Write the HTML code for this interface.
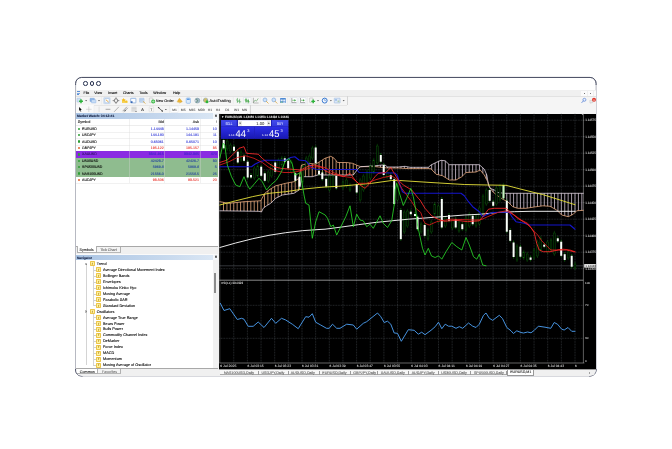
<!DOCTYPE html>
<html lang="en"><head><meta charset="utf-8"><title>MetaTrader 4</title>
<style>
html,body{margin:0;padding:0;background:#fff;}
body{width:672px;height:449px;position:relative;overflow:hidden;font-family:"Liberation Sans", sans-serif;text-rendering:geometricPrecision;}
.a{position:absolute;box-sizing:border-box;}
.t{white-space:nowrap;overflow:visible;-webkit-text-stroke-width:0.09px;}
svg{position:absolute;left:0;top:0;overflow:visible;}
svg text{font-family:"Liberation Sans", sans-serif;}
</style></head><body>
<svg width="672" height="449" viewBox="0 0 672 449"><path d="M75.6 83.45 A6.0 6.0 0 0 1 81.6 77.45 H590.1 A6.0 6.0 0 0 1 596.1 83.45 V370.0 A6.0 6.0 0 0 1 590.1 376.0 H81.6 A6.0 6.0 0 0 1 75.6 370.0 Z" fill="#fff" stroke="#acaeb8" stroke-width="0.95"/><path d="M75.6 84.95 V83.45 A6.0 6.0 0 0 1 81.6 77.45 H590.1 A6.0 6.0 0 0 1 596.1 83.45 V84.95" fill="none" stroke="#454a60" stroke-width="0.95"/><path d="M75.6 369.0 V370.0 A6.0 6.0 0 0 0 81.6 376.0 h1" fill="none" stroke="#454a60" stroke-width="0.95"/><path d="M596.1 369.0 V370.0 A6.0 6.0 0 0 1 590.1 376.0 h-1" fill="none" stroke="#454a60" stroke-width="0.95"/></svg>
<div class="a" id="clip" style="left:76.05000000000001px;top:77.9px;width:519.60px;height:297.65px;border-radius:6px;overflow:hidden;will-change:transform;"><div class="a" style="left:-76.05000000000001px;top:-77.9px;width:672px;height:449px;">
<div class="a" style="left:83.35px;top:81.25px;width:4.5px;height:4.5px;border-radius:50%;border:0.68px solid #27314f;"></div>
<div class="a" style="left:89.85px;top:81.25px;width:4.5px;height:4.5px;border-radius:50%;border:0.68px solid #27314f;"></div>
<div class="a" style="left:96.25px;top:81.25px;width:4.5px;height:4.5px;border-radius:50%;border:0.68px solid #27314f;"></div>
<div class="a" style="left:76.00px;top:90.30px;width:521.00px;height:5.80px;background:#f0f0f0;"></div>
<div class="a" style="left:76.60px;top:91.30px;width:3.60px;height:0.70px;background:#5b8fd6;"></div>
<div class="a" style="left:76.60px;top:92.60px;width:3.60px;height:0.60px;background:#7aa7e0;"></div>
<div class="a" style="left:76.60px;top:93.80px;width:2.60px;height:0.60px;background:#5b8fd6;"></div>
<div class="a t" style="top:90.00px;height:6px;line-height:6px;font-size:3.6px;color:#000;left:83.60px;">File</div>
<div class="a t" style="top:90.00px;height:6px;line-height:6px;font-size:3.6px;color:#000;left:94.30px;">View</div>
<div class="a t" style="top:90.00px;height:6px;line-height:6px;font-size:3.6px;color:#000;left:108.20px;">Insert</div>
<div class="a t" style="top:90.00px;height:6px;line-height:6px;font-size:3.6px;color:#000;left:123.00px;">Charts</div>
<div class="a t" style="top:90.00px;height:6px;line-height:6px;font-size:3.6px;color:#000;left:139.20px;">Tools</div>
<div class="a t" style="top:90.00px;height:6px;line-height:6px;font-size:3.6px;color:#000;left:153.30px;">Window</div>
<div class="a t" style="top:90.00px;height:6px;line-height:6px;font-size:3.6px;color:#000;left:173.00px;">Help</div>
<div class="a" style="left:581.50px;top:91.30px;width:5.40px;height:4.20px;background:#fbfbfb;"></div>
<div class="a" style="left:583.70px;top:93.20px;width:1.00px;height:0.70px;background:#777;"></div>
<div class="a" style="left:588.00px;top:91.30px;width:5.40px;height:4.20px;background:#fbfbfb;"></div>
<div class="a" style="left:590.20px;top:93.20px;width:1.00px;height:0.70px;background:#777;"></div>
<div class="a" style="left:594.50px;top:91.30px;width:5.40px;height:4.20px;background:#fbfbfb;"></div>
<div class="a" style="left:596.70px;top:93.20px;width:1.00px;height:0.70px;background:#777;"></div>
<div class="a" style="left:76.00px;top:96.10px;width:521.00px;height:17.50px;background:#f5f5f5;"></div>
<div class="a" style="left:76.00px;top:96.00px;width:521.00px;height:0.40px;background:#e2e2e2;"></div>
<div class="a" style="left:76.00px;top:104.60px;width:271.00px;height:0.40px;background:#e6e6e6;"></div>
<div class="a" style="left:346.60px;top:96.30px;width:0.40px;height:8.50px;background:#d5d5d5;"></div>
<div class="a" style="left:249.60px;top:105.00px;width:0.40px;height:8.40px;background:#d5d5d5;"></div>
<div class="a" style="left:0;top:0;width:672px;height:449px;filter:blur(0.28px);">
<div class="a" style="left:76.30px;top:105.00px;width:17.50px;height:8.50px;background:#fafafa;"></div>
<svg width="672" height="449" viewBox="0 0 672 449"><rect x="77.00" y="98.20" width="3.60" height="3.80" rx="0.3" fill="#cfe3f3" stroke="#86acd8" stroke-width="0.35" />
<path d="M79.05 100.45899999999999 H80.259 V99.24999999999999 H81.741 V100.45899999999999 H82.95 V101.94099999999999 H81.741 V103.14999999999999 H80.259 V101.94099999999999 H79.05 Z" fill="#2db33a"/>
<path d="M85.1 100.25 H87.1 L86.1 101.35 Z" fill="#2a2a2a"/>
<rect x="90.00" y="98.30" width="4.40" height="3.20" rx="0.3" fill="#8fb8ea" stroke="#5f8fd2" stroke-width="0.35" />
<rect x="91.40" y="99.70" width="4.50" height="3.20" rx="0.3" fill="#c9def6" stroke="#6d9bd8" stroke-width="0.35" />
<path d="M98.0 100.25 H100.0 L99.0 101.35 Z" fill="#2a2a2a"/>
<path d="M101.7 97.39999999999999 V103.8" fill="none" stroke="#d0d0d0" stroke-width="0.35" stroke-linecap="round"/>
<path d="M102.10000000000001 97.39999999999999 V103.8" fill="none" stroke="#ffffff" stroke-width="0.35" stroke-linecap="round"/>
<rect x="103.70" y="97.60" width="6.50" height="6.10" rx="0.3" fill="#d8e6f6" stroke="#a9c2e2" stroke-width="0.35" />
<rect x="104.90" y="98.50" width="4.30" height="4.30" rx="0.3" fill="#fbfcfe" stroke="#7fa3d6" stroke-width="0.4" />
<path d="M106.2 100.0 L108.3 101.8" fill="none" stroke="#e0a030" stroke-width="0.9" stroke-linecap="round"/>
<circle cx="116.00" cy="100.60" r="1.9" fill="none" stroke="#4a4a4a" stroke-width="0.55"/>
<path d="M116 97.6 V99.19999999999999 M116 102.0 V103.6 M113.0 100.6 H114.6 M117.4 100.6 H119.0" fill="none" stroke="#4a4a4a" stroke-width="0.5" stroke-linecap="round"/>
<path d="M122.0 100.0 L124.6 100.0 L125.2 100.8 L127.6 100.8 L127.6 103.0 L122.0 103.0 Z" fill="#f6d45a"/>
<path d="M123.6 98.0 L124.3 99.3 L125.7 99.39999999999999 L124.7 100.39999999999999 L125.0 101.8 L123.6 101.1 L122.3 101.8 L122.6 100.39999999999999 L121.6 99.39999999999999 L123.0 99.3 Z" fill="#f4bd22"/>
<circle cx="126.20" cy="101.60" r="1.0" fill="#f2c12e"/>
<rect x="130.70" y="98.30" width="5.20" height="4.60" rx="0.3" fill="#fafcff" stroke="#4f82c8" stroke-width="0.5" />
<rect x="130.70" y="101.20" width="1.90" height="1.70" rx="0.3" fill="#3566b4" />
<rect x="131.00" y="98.40" width="4.60" height="0.70" rx="0.3" fill="#9dbde6" />
<rect x="139.60" y="98.30" width="4.40" height="3.90" rx="0.3" fill="#d7e6f7" stroke="#6c9ad6" stroke-width="0.4" />
<path d="M140.4 99.6 H143.2 M140.4 100.8 H142.4" fill="none" stroke="#7fa6da" stroke-width="0.4" stroke-linecap="round"/>
<path d="M143.2 101.5 L145.2 103.3" fill="none" stroke="#d9a63a" stroke-width="0.8" stroke-linecap="round"/>
<path d="M147.2 97.39999999999999 V103.8" fill="none" stroke="#d0d0d0" stroke-width="0.35" stroke-linecap="round"/>
<path d="M147.6 97.39999999999999 V103.8" fill="none" stroke="#ffffff" stroke-width="0.35" stroke-linecap="round"/>
<rect x="149.30" y="98.00" width="3.50" height="4.60" rx="0.3" fill="#f4f4f4" stroke="#9a9a9a" stroke-width="0.35" />
<circle cx="153.20" cy="101.50" r="1.95" fill="#2db33a"/>
<path d="M152.1 101.5 H154.3 M153.2 100.39999999999999 V102.6" fill="none" stroke="#e8ffe8" stroke-width="0.45" stroke-linecap="round"/>
<path d="M177.2 101.6 L179.4 98.19999999999999 L181.0 100.0 L182.3 101.8 L180.0 102.8 Z" fill="#ebb534" stroke="#c48a14" stroke-width="0.3" stroke-linecap="round"/>
<rect x="186.20" y="98.00" width="4.20" height="5.30" rx="0.9" fill="#dcebfb" stroke="#5f9be2" stroke-width="0.5" />
<rect x="186.90" y="98.60" width="2.80" height="1.40" rx="0.3" fill="#5f9be2" />
<circle cx="197.40" cy="100.60" r="2.5" fill="#9fb8c4" stroke="#6f8b9c" stroke-width="0.4"/>
<path d="M196.6 99.0 Q198.8 100.6 196.6 102.39999999999999" fill="none" stroke="#4c7a5a" stroke-width="0.7" stroke-linecap="round"/>
<rect x="194.60" y="100.00" width="1.80" height="1.40" rx="0.3" fill="#c9d3da" />
<path d="M201.6 97.39999999999999 V103.8" fill="none" stroke="#d0d0d0" stroke-width="0.35" stroke-linecap="round"/>
<path d="M202.0 97.39999999999999 V103.8" fill="none" stroke="#ffffff" stroke-width="0.35" stroke-linecap="round"/>
<circle cx="205.60" cy="100.20" r="2.2" fill="#f0cf52" stroke="#6a93c8" stroke-width="0.45"/>
<path d="M203.6 100.0 H207.6" fill="none" stroke="#5b86c4" stroke-width="0.5" stroke-linecap="round"/>
<circle cx="207.00" cy="101.80" r="1.5" fill="#2db33a"/>
<path d="M233.4 97.39999999999999 V103.8" fill="none" stroke="#d0d0d0" stroke-width="0.35" stroke-linecap="round"/>
<path d="M233.8 97.39999999999999 V103.8" fill="none" stroke="#ffffff" stroke-width="0.35" stroke-linecap="round"/>
<path d="M237.4 98.3 V102.6 M236.4 100.0 H237.4 M237.4 101.39999999999999 H238.4 M239.6 99.19999999999999 V103.0 M238.6 100.8 H239.6 M239.6 101.8 H240.8" fill="none" stroke="#2f9a3a" stroke-width="0.5" stroke-linecap="round"/>
<rect x="243.40" y="97.50" width="7.60" height="6.20" rx="0.3" fill="#fbfcfd" stroke="#c4d0de" stroke-width="0.35" />
<path d="M246.0 98.3 V102.6 M245.0 100.0 H246.0 M246.0 101.39999999999999 H247.0 M248.2 99.19999999999999 V103.0 M247.2 100.8 H248.2 M248.2 101.8 H249.4" fill="none" stroke="#2a8a2a" stroke-width="0.5" stroke-linecap="round"/>
<rect x="245.50" y="99.10" width="1.10" height="2.40" rx="0.3" fill="#49b14f" />
<rect x="247.70" y="100.00" width="1.10" height="2.20" rx="0.3" fill="#49b14f" />
<path d="M253.6 102.19999999999999 L255.2 100.0 L256.4 101.19999999999999 L258.0 98.8" fill="none" stroke="#3a8a3a" stroke-width="0.5" stroke-linecap="round"/>
<path d="M253.4 98.19999999999999 V103.0 H258.2" fill="none" stroke="#555" stroke-width="0.4" stroke-linecap="round"/>
<path d="M260.4 97.39999999999999 V103.8" fill="none" stroke="#d0d0d0" stroke-width="0.35" stroke-linecap="round"/>
<path d="M260.79999999999995 97.39999999999999 V103.8" fill="none" stroke="#ffffff" stroke-width="0.35" stroke-linecap="round"/>
<circle cx="265.00" cy="99.90" r="1.9" fill="#cfe3f8" stroke="#5e90d2" stroke-width="0.5"/>
<path d="M266.4 101.39999999999999 L268.2 103.19999999999999" fill="none" stroke="#d9a63a" stroke-width="0.8" stroke-linecap="round"/>
<circle cx="273.80" cy="99.90" r="1.9" fill="#cfe3f8" stroke="#5e90d2" stroke-width="0.5"/>
<path d="M275.2 101.39999999999999 L277.0 103.19999999999999" fill="none" stroke="#d9a63a" stroke-width="0.8" stroke-linecap="round"/>
<rect x="280.10" y="98.10" width="5.70" height="5.00" rx="0.3" fill="#4f8ad4" />
<rect x="280.60" y="99.40" width="2.10" height="1.60" rx="0.3" fill="#e4eefa" />
<rect x="283.20" y="99.40" width="2.10" height="1.60" rx="0.3" fill="#e4eefa" />
<rect x="280.60" y="101.50" width="2.10" height="1.20" rx="0.3" fill="#9ad09a" />
<rect x="283.20" y="101.50" width="2.10" height="1.20" rx="0.3" fill="#e4eefa" />
<path d="M288.0 97.39999999999999 V103.8" fill="none" stroke="#d0d0d0" stroke-width="0.35" stroke-linecap="round"/>
<path d="M288.4 97.39999999999999 V103.8" fill="none" stroke="#ffffff" stroke-width="0.35" stroke-linecap="round"/>
<rect x="290.20" y="97.50" width="7.00" height="6.20" rx="0.3" fill="#fbfcfd" stroke="#c4d0de" stroke-width="0.35" />
<path d="M291.8 98.39999999999999 V102.6 H296.0" fill="none" stroke="#444" stroke-width="0.45" stroke-linecap="round"/>
<path d="M292.59999999999997 100.3 H294.4" fill="none" stroke="#2a9a2a" stroke-width="0.5" stroke-linecap="round"/>
<path d="M294.4 99.19999999999999 L296.0 100.3 L294.4 101.39999999999999 Z" fill="#2a9a2a"/>
<rect x="298.90" y="97.50" width="7.00" height="6.20" rx="0.3" fill="#fbfcfd" stroke="#c4d0de" stroke-width="0.35" />
<path d="M300.5 98.39999999999999 V102.6 H304.7" fill="none" stroke="#444" stroke-width="0.45" stroke-linecap="round"/>
<path d="M301.29999999999995 100.3 H303.09999999999997" fill="none" stroke="#2a9a2a" stroke-width="0.5" stroke-linecap="round"/>
<path d="M303.09999999999997 99.19999999999999 L304.7 100.3 L303.09999999999997 101.39999999999999 Z" fill="#2a9a2a"/>
<path d="M307.6 97.39999999999999 V103.8" fill="none" stroke="#d0d0d0" stroke-width="0.35" stroke-linecap="round"/>
<path d="M308.0 97.39999999999999 V103.8" fill="none" stroke="#ffffff" stroke-width="0.35" stroke-linecap="round"/>
<rect x="309.60" y="98.00" width="3.40" height="4.40" rx="0.3" fill="#f4f4f4" stroke="#9a9a9a" stroke-width="0.35" />
<path d="M311.3 100.678 H312.478 V99.49999999999999 H313.92199999999997 V100.678 H315.09999999999997 V102.12199999999999 H313.92199999999997 V103.3 H312.478 V102.12199999999999 H311.3 Z" fill="#2db33a"/>
<path d="M317.0 100.25 H319.0 L318.0 101.35 Z" fill="#2a2a2a"/>
<circle cx="324.70" cy="100.60" r="2.45" fill="#f4f8fe" stroke="#2f72cc" stroke-width="0.95"/>
<path d="M324.7 99.3 V100.69999999999999 H325.9" fill="none" stroke="#2f72cc" stroke-width="0.5" stroke-linecap="round"/>
<path d="M329.9 100.25 H331.9 L330.9 101.35 Z" fill="#2a2a2a"/>
<rect x="334.30" y="98.20" width="5.80" height="4.80" rx="0.3" fill="#dbe7f6" stroke="#86a9d8" stroke-width="0.45" />
<rect x="335.00" y="99.10" width="2.00" height="1.70" rx="0.3" fill="#9bbde8" />
<rect x="337.60" y="100.40" width="1.80" height="1.80" rx="0.3" fill="#b3cdb0" />
<path d="M342.7 100.25 H344.7 L343.7 101.35 Z" fill="#2a2a2a"/>
<circle cx="584.40" cy="99.80" r="1.5" fill="#eef3fc" stroke="#3c6fd0" stroke-width="0.6"/>
<path d="M583.3 101.0 L581.8 102.6" fill="none" stroke="#3c6fd0" stroke-width="0.7" stroke-linecap="round"/>
<path d="M590.2 100.39999999999999 L592.8 100.39999999999999 L592.8 102.6 L591.6 102.6 L590.8 103.5 L590.8 102.6 L590.2 102.6 Z" fill="#ececec" stroke="#a8a8a8" stroke-width="0.3" stroke-linecap="round"/>
<circle cx="594.00" cy="99.80" r="2.0" fill="#e0382c"/>
<text x="594.0" y="100.75" font-size="2.6" fill="#fff" text-anchor="middle" font-weight="bold">1</text>
<path d="M79.1 106.89999999999999 L79.1 110.89999999999999 L80.0 110.1 L80.7 111.7 L81.3 111.39999999999999 L80.6 109.89999999999999 L81.8 109.8 Z" fill="#111"/>
<path d="M88.8 106.89999999999999 V111.7 M86.4 109.3 H91.2" fill="none" stroke="#b4b4b4" stroke-width="0.45" stroke-linecap="round"/>
<path d="M94.2 106.1 V112.5" fill="none" stroke="#d0d0d0" stroke-width="0.35" stroke-linecap="round"/>
<path d="M94.60000000000001 106.1 V112.5" fill="none" stroke="#ffffff" stroke-width="0.35" stroke-linecap="round"/>
<path d="M99.1 106.89999999999999 V111.7" fill="none" stroke="#c8c8c8" stroke-width="0.5" stroke-linecap="round"/>
<path d="M106.0 109.3 H110.0" fill="none" stroke="#4a4a4a" stroke-width="0.45" stroke-linecap="round"/>
<path d="M114.4 111.5 L118.6 107.1" fill="none" stroke="#5a5a5a" stroke-width="0.45" stroke-linecap="round"/>
<path d="M122.9 110.89999999999999 L126.6 107.1 M123.9 111.89999999999999 L127.6 108.1" fill="none" stroke="#5a5a5a" stroke-width="0.5" stroke-linecap="round"/>
<circle cx="125.20" cy="110.60" r="0.75" fill="#666"/>
<path d="M131.8 107.3 H136.2" fill="none" stroke="#a0a0a0" stroke-width="0.4" stroke-linecap="round"/>
<path d="M131.8 108.55 H136.2" fill="none" stroke="#a0a0a0" stroke-width="0.4" stroke-linecap="round"/>
<path d="M131.8 109.8 H136.2" fill="none" stroke="#a0a0a0" stroke-width="0.4" stroke-linecap="round"/>
<path d="M131.8 111.05 H136.2" fill="none" stroke="#a0a0a0" stroke-width="0.4" stroke-linecap="round"/>
<path d="M135.0 110.89999999999999 L136.0 112.1 L137.0 110.89999999999999 Z" fill="#666"/>
<text x="142.5" y="110.8" font-size="4.2" fill="#2a2a2a" text-anchor="middle" font-weight="bold">A</text>
<rect x="149.20" y="106.90" width="4.40" height="4.80" rx="0.2" fill="#fbfbfb" stroke="#8a8a8a" stroke-width="0.3" stroke-dasharray="0.5 0.4"/>
<text x="151.4" y="110.6" font-size="3.6" fill="#2a2a2a" text-anchor="middle">T</text>
<path d="M158.2 107.3 L160.0 109.1 M160.6 109.5 L162.6 111.3" fill="none" stroke="#3a3a3a" stroke-width="0.8" stroke-linecap="round"/>
<path d="M158.0 107.1 L159.6 107.3 L158.3 108.5 Z M162.8 111.5 L161.2 111.3 L162.5 110.1 Z" fill="#3a3a3a"/>
<path d="M164.9 108.95 H166.9 L165.9 110.05 Z" fill="#2a2a2a"/>
<path d="M169.6 106.1 V112.5" fill="none" stroke="#d0d0d0" stroke-width="0.35" stroke-linecap="round"/>
<path d="M170.0 106.1 V112.5" fill="none" stroke="#ffffff" stroke-width="0.35" stroke-linecap="round"/>
<rect x="170.60" y="105.70" width="78.40" height="7.00" rx="0.3" fill="#fbfbfb" />
<rect x="170.90" y="106.10" width="7.10" height="6.40" rx="0.3" fill="#ffffff" stroke="#cbd6e3" stroke-width="0.3" /></svg>
<div class="a t" style="top:97.60px;height:6px;line-height:6px;font-size:3.72px;color:#111;left:155.90px;">New Order</div>
<div class="a t" style="top:97.60px;height:6px;line-height:6px;font-size:3.93px;color:#111;left:209.60px;">AutoTrading</div>
<div class="a t" style="top:106.80px;height:6px;line-height:6px;font-size:3.35px;color:#555;left:172.20px;">M1</div>
<div class="a t" style="top:106.80px;height:6px;line-height:6px;font-size:3.35px;color:#555;left:180.90px;">M5</div>
<div class="a t" style="top:106.80px;height:6px;line-height:6px;font-size:3.35px;color:#555;left:189.00px;">M15</div>
<div class="a t" style="top:106.80px;height:6px;line-height:6px;font-size:3.35px;color:#555;left:198.10px;">M30</div>
<div class="a t" style="top:106.80px;height:6px;line-height:6px;font-size:3.35px;color:#555;left:207.80px;">H1</div>
<div class="a t" style="top:106.80px;height:6px;line-height:6px;font-size:3.35px;color:#555;left:215.90px;">H4</div>
<div class="a t" style="top:106.80px;height:6px;line-height:6px;font-size:3.35px;color:#555;left:225.20px;">D1</div>
<div class="a t" style="top:106.80px;height:6px;line-height:6px;font-size:3.35px;color:#555;left:234.10px;">W1</div>
<div class="a t" style="top:106.80px;height:6px;line-height:6px;font-size:3.35px;color:#555;left:242.10px;">MN</div>
</div>
<div class="a" style="left:76.30px;top:113.30px;width:141.70px;height:5.60px;background:linear-gradient(90deg,#a9c3e3,#c5d7ed 60%,#dbe7f4);"></div>
<div class="a" style="left:213.00px;top:113.30px;width:5.00px;height:5.60px;background:#f3f7fb;"></div>
<div class="a t" style="top:113.30px;height:6px;line-height:6px;font-size:3.38px;color:#0f1c3f;font-weight:bold;left:77.00px;">Market Watch: 04:13:41</div>
<div class="a t" style="top:113.20px;height:6px;line-height:6px;font-size:4.2px;color:#222;font-weight:bold;left:214.70px;">×</div>
<div class="a" style="left:76.30px;top:118.90px;width:141.70px;height:127.40px;background:#fff;"></div>
<div class="a t" style="top:119.20px;height:6px;line-height:6px;font-size:3.8px;color:#111;left:77.80px;">Symbol</div>
<div class="a t" style="top:119.20px;height:6px;line-height:6px;font-size:3.7px;color:#111;right:508.10px;text-align:right;">Bid</div>
<div class="a t" style="top:119.20px;height:6px;line-height:6px;font-size:3.7px;color:#111;right:473.00px;text-align:right;">Ask</div>
<div class="a t" style="top:119.20px;height:6px;line-height:6px;font-size:3.7px;color:#333;right:455.20px;text-align:right;">!</div>
<div class="a" style="left:76.30px;top:125.30px;width:141.70px;height:0.25px;background:#ededed;"></div>
<div class="a" style="left:76.30px;top:131.71px;width:141.70px;height:0.20px;background:#f1f1f1;"></div>
<div class="a" style="left:78.1px;top:127.70px;width:2.4px;height:2.4px;background:#2e9e35;border-radius:50%;margin:-0.2px 0 0 -0.3px;"></div>
<div class="a t" style="top:125.70px;height:6px;line-height:6px;font-size:3.52px;color:#000;left:82.10px;">EURUSD</div>
<div class="a t" style="top:125.70px;height:6px;line-height:6px;font-size:3.6px;color:#2a33d6;right:508.10px;text-align:right;">1.14443</div>
<div class="a t" style="top:125.70px;height:6px;line-height:6px;font-size:3.6px;color:#2a33d6;right:473.00px;text-align:right;">1.14453</div>
<div class="a t" style="top:125.70px;height:6px;line-height:6px;font-size:3.6px;color:#2a33d6;right:455.20px;text-align:right;">10</div>
<div class="a" style="left:76.30px;top:138.12px;width:141.70px;height:0.20px;background:#f1f1f1;"></div>
<div class="a" style="left:78.1px;top:134.12px;width:2.4px;height:2.4px;background:#2e9e35;border-radius:50%;margin:-0.2px 0 0 -0.3px;"></div>
<div class="a t" style="top:132.12px;height:6px;line-height:6px;font-size:3.52px;color:#000;left:82.10px;">USDJPY</div>
<div class="a t" style="top:132.12px;height:6px;line-height:6px;font-size:3.6px;color:#2a33d6;right:508.10px;text-align:right;">144.180</div>
<div class="a t" style="top:132.12px;height:6px;line-height:6px;font-size:3.6px;color:#2a33d6;right:473.00px;text-align:right;">144.191</div>
<div class="a t" style="top:132.12px;height:6px;line-height:6px;font-size:3.6px;color:#2a33d6;right:455.20px;text-align:right;">11</div>
<div class="a" style="left:76.30px;top:144.53px;width:141.70px;height:0.20px;background:#f1f1f1;"></div>
<div class="a" style="left:78.1px;top:140.52px;width:2.4px;height:2.4px;background:#2e9e35;border-radius:50%;margin:-0.2px 0 0 -0.3px;"></div>
<div class="a t" style="top:138.52px;height:6px;line-height:6px;font-size:3.52px;color:#000;left:82.10px;">AUDUSD</div>
<div class="a t" style="top:138.52px;height:6px;line-height:6px;font-size:3.6px;color:#2a33d6;right:508.10px;text-align:right;">0.65061</div>
<div class="a t" style="top:138.52px;height:6px;line-height:6px;font-size:3.6px;color:#2a33d6;right:473.00px;text-align:right;">0.65071</div>
<div class="a t" style="top:138.52px;height:6px;line-height:6px;font-size:3.6px;color:#2a33d6;right:455.20px;text-align:right;">10</div>
<div class="a" style="left:76.30px;top:150.94px;width:141.70px;height:0.20px;background:#f1f1f1;"></div>
<div class="a" style="left:78.1px;top:146.94px;width:2.4px;height:2.4px;background:#e0622c;border-radius:50%;margin:-0.2px 0 0 -0.3px;"></div>
<div class="a t" style="top:144.94px;height:6px;line-height:6px;font-size:3.52px;color:#000;left:82.10px;">GBPJPY</div>
<div class="a t" style="top:144.94px;height:6px;line-height:6px;font-size:3.6px;color:#e8322a;right:508.10px;text-align:right;">195.122</div>
<div class="a t" style="top:144.94px;height:6px;line-height:6px;font-size:3.6px;color:#e8322a;right:473.00px;text-align:right;">195.157</div>
<div class="a t" style="top:144.94px;height:6px;line-height:6px;font-size:3.6px;color:#e8322a;right:455.20px;text-align:right;">35</div>
<div class="a" style="left:76.30px;top:151.14px;width:141.70px;height:6.41px;background:#8a2be2;"></div>
<div class="a" style="left:78.1px;top:153.34px;width:2.4px;height:2.4px;background:#2e9e35;border-radius:50%;margin:-0.2px 0 0 -0.3px;"></div>
<div class="a t" style="top:151.34px;height:6px;line-height:6px;font-size:3.52px;color:#2a1060;left:82.10px;">XAUUSD</div>
<div class="a t" style="top:151.34px;height:6px;line-height:6px;font-size:3.6px;color:#3b22c8;right:508.10px;text-align:right;">3341.915</div>
<div class="a t" style="top:151.34px;height:6px;line-height:6px;font-size:3.6px;color:#3b22c8;right:473.00px;text-align:right;">3342.385</div>
<div class="a t" style="top:151.34px;height:6px;line-height:6px;font-size:3.6px;color:#3b22c8;right:455.20px;text-align:right;">470</div>
<div class="a" style="left:76.30px;top:157.55px;width:141.70px;height:6.41px;background:#8fbc8f;"></div>
<div class="a" style="left:78.1px;top:159.75px;width:2.4px;height:2.4px;background:#2e9e35;border-radius:50%;margin:-0.2px 0 0 -0.3px;"></div>
<div class="a t" style="top:157.75px;height:6px;line-height:6px;font-size:3.52px;color:#000;left:82.10px;">US30USD</div>
<div class="a t" style="top:157.75px;height:6px;line-height:6px;font-size:3.6px;color:#1f3f9e;right:508.10px;text-align:right;">42423.7</div>
<div class="a t" style="top:157.75px;height:6px;line-height:6px;font-size:3.6px;color:#1f3f9e;right:473.00px;text-align:right;">42426.7</div>
<div class="a t" style="top:157.75px;height:6px;line-height:6px;font-size:3.6px;color:#1f3f9e;right:455.20px;text-align:right;">30</div>
<div class="a" style="left:76.30px;top:163.96px;width:141.70px;height:6.41px;background:#8fbc8f;"></div>
<div class="a" style="left:78.1px;top:166.17px;width:2.4px;height:2.4px;background:#2e9e35;border-radius:50%;margin:-0.2px 0 0 -0.3px;"></div>
<div class="a t" style="top:164.17px;height:6px;line-height:6px;font-size:3.52px;color:#000;left:82.10px;">SPX500USD</div>
<div class="a t" style="top:164.17px;height:6px;line-height:6px;font-size:3.6px;color:#1f3f9e;right:508.10px;text-align:right;">5969.8</div>
<div class="a t" style="top:164.17px;height:6px;line-height:6px;font-size:3.6px;color:#1f3f9e;right:473.00px;text-align:right;">5969.8</div>
<div class="a t" style="top:164.17px;height:6px;line-height:6px;font-size:3.6px;color:#1f3f9e;right:455.20px;text-align:right;">5</div>
<div class="a" style="left:76.30px;top:170.37px;width:141.70px;height:6.41px;background:#8fbc8f;"></div>
<div class="a" style="left:78.1px;top:172.57px;width:2.4px;height:2.4px;background:#2e9e35;border-radius:50%;margin:-0.2px 0 0 -0.3px;"></div>
<div class="a t" style="top:170.57px;height:6px;line-height:6px;font-size:3.52px;color:#000;left:82.10px;">NAS100USD</div>
<div class="a t" style="top:170.57px;height:6px;line-height:6px;font-size:3.6px;color:#1f3f9e;right:508.10px;text-align:right;">21556.0</div>
<div class="a t" style="top:170.57px;height:6px;line-height:6px;font-size:3.6px;color:#1f3f9e;right:473.00px;text-align:right;">21558.5</div>
<div class="a t" style="top:170.57px;height:6px;line-height:6px;font-size:3.6px;color:#1f3f9e;right:455.20px;text-align:right;">25</div>
<div class="a" style="left:76.30px;top:182.99px;width:141.70px;height:0.20px;background:#f1f1f1;"></div>
<div class="a" style="left:78.1px;top:178.99px;width:2.4px;height:2.4px;background:#e0622c;border-radius:50%;margin:-0.2px 0 0 -0.3px;"></div>
<div class="a t" style="top:176.99px;height:6px;line-height:6px;font-size:3.52px;color:#000;left:82.10px;">AUDJPY</div>
<div class="a t" style="top:176.99px;height:6px;line-height:6px;font-size:3.6px;color:#e8322a;right:508.10px;text-align:right;">93.506</div>
<div class="a t" style="top:176.99px;height:6px;line-height:6px;font-size:3.6px;color:#e8322a;right:473.00px;text-align:right;">93.521</div>
<div class="a t" style="top:176.99px;height:6px;line-height:6px;font-size:3.6px;color:#e8322a;right:455.20px;text-align:right;">20</div>
<div class="a" style="left:129.25px;top:118.90px;width:0.30px;height:64.29px;background:rgba(215,215,215,.35);"></div>
<div class="a" style="left:164.25px;top:118.90px;width:0.30px;height:64.29px;background:rgba(215,215,215,.35);"></div>
<div class="a" style="left:199.85px;top:118.90px;width:0.30px;height:64.29px;background:rgba(215,215,215,.35);"></div>
<div class="a" style="left:76.30px;top:246.20px;width:141.70px;height:7.40px;background:#f0f0f0;"></div>
<div class="a" style="left:76.30px;top:246.10px;width:141.70px;height:0.40px;background:#a8a8a8;"></div>
<div class="a" style="left:76.80px;top:246.30px;width:20.10px;height:6.90px;background:#fff;border:0.3px solid #b0b0b0;border-top:none;"></div>
<div class="a t" style="top:246.80px;height:6px;line-height:6px;font-size:3.7px;color:#222;left:79.60px;">Symbols</div>
<div class="a" style="left:96.90px;top:246.50px;width:23.70px;height:6.10px;background:#f4f4f4;border-right:0.3px solid #b0b0b0;border-bottom:0.3px solid #b8b8b8;"></div>
<div class="a t" style="top:246.70px;height:6px;line-height:6px;font-size:3.7px;color:#666;left:100.20px;">Tick Chart</div>
<div class="a" style="left:76.30px;top:253.60px;width:141.70px;height:1.40px;background:#fafafa;"></div>
<div class="a" style="left:76.30px;top:255.00px;width:141.70px;height:4.80px;background:linear-gradient(90deg,#aac4e3,#c6d8ed 60%,#dce8f5);"></div>
<div class="a" style="left:213.00px;top:255.00px;width:5.00px;height:4.80px;background:#f3f7fb;"></div>
<div class="a t" style="top:254.40px;height:6px;line-height:6px;font-size:3.25px;color:#0f1c3f;font-weight:bold;left:77.00px;">Navigator</div>
<div class="a t" style="top:254.30px;height:6px;line-height:6px;font-size:4.2px;color:#222;font-weight:bold;left:214.70px;">×</div>
<div class="a" style="left:76.30px;top:259.80px;width:141.70px;height:108.60px;background:#fff;"></div>
<div class="a" style="left:86.15px;top:265.10px;width:0.25px;height:44.96px;background:#d4d4d4;"></div>
<div class="a" style="left:86.15px;top:312.86px;width:0.25px;height:52.33px;background:#d4d4d4;"></div>
<div class="a" style="left:85.0px;top:262.60px;width:2.2px;height:2.2px;border:0.3px solid #bbb;background:#fff;"></div>
<div class="a" style="left:85.60px;top:263.60px;width:1.00px;height:0.20px;background:#888;"></div>
<div class="a" style="left:89.90px;top:261.30px;width:4.8px;height:4.8px;background:#fff2a0;border:0.36px solid #ecc64a;border-radius:0.7px;"></div>
<div class="a t" style="top:260.75px;height:6px;line-height:6px;font-size:3.2px;color:#b08c1e;left:91.70px;font-style:italic;font-weight:bold;">f</div>
<div class="a t" style="top:260.70px;height:6px;line-height:6px;font-size:3.75px;color:#000;left:96.90px;">Trend</div>
<div class="a" style="left:92.90px;top:269.55px;width:3.30px;height:0.24px;background:#d0d0d0;"></div>
<div class="a" style="left:96.30px;top:267.27px;width:4.8px;height:4.8px;background:#fff2a0;border:0.36px solid #ecc64a;border-radius:0.7px;"></div>
<div class="a t" style="top:266.72px;height:6px;line-height:6px;font-size:3.2px;color:#b08c1e;left:98.10px;font-style:italic;font-weight:bold;">f</div>
<div class="a t" style="top:266.67px;height:6px;line-height:6px;font-size:3.78px;color:#000;left:103.10px;">Average Directional Movement Index</div>
<div class="a" style="left:92.90px;top:275.52px;width:3.30px;height:0.24px;background:#d0d0d0;"></div>
<div class="a" style="left:96.30px;top:273.24px;width:4.8px;height:4.8px;background:#fff2a0;border:0.36px solid #ecc64a;border-radius:0.7px;"></div>
<div class="a t" style="top:272.69px;height:6px;line-height:6px;font-size:3.2px;color:#b08c1e;left:98.10px;font-style:italic;font-weight:bold;">f</div>
<div class="a t" style="top:272.64px;height:6px;line-height:6px;font-size:3.78px;color:#000;left:103.10px;">Bollinger Bands</div>
<div class="a" style="left:92.90px;top:281.49px;width:3.30px;height:0.24px;background:#d0d0d0;"></div>
<div class="a" style="left:96.30px;top:279.21px;width:4.8px;height:4.8px;background:#fff2a0;border:0.36px solid #ecc64a;border-radius:0.7px;"></div>
<div class="a t" style="top:278.66px;height:6px;line-height:6px;font-size:3.2px;color:#b08c1e;left:98.10px;font-style:italic;font-weight:bold;">f</div>
<div class="a t" style="top:278.61px;height:6px;line-height:6px;font-size:3.78px;color:#000;left:103.10px;">Envelopes</div>
<div class="a" style="left:92.90px;top:287.46px;width:3.30px;height:0.24px;background:#d0d0d0;"></div>
<div class="a" style="left:96.30px;top:285.18px;width:4.8px;height:4.8px;background:#fff2a0;border:0.36px solid #ecc64a;border-radius:0.7px;"></div>
<div class="a t" style="top:284.63px;height:6px;line-height:6px;font-size:3.2px;color:#b08c1e;left:98.10px;font-style:italic;font-weight:bold;">f</div>
<div class="a t" style="top:284.58px;height:6px;line-height:6px;font-size:3.78px;color:#000;left:103.10px;">Ichimoku Kinko Hyo</div>
<div class="a" style="left:92.90px;top:293.43px;width:3.30px;height:0.24px;background:#d0d0d0;"></div>
<div class="a" style="left:96.30px;top:291.15px;width:4.8px;height:4.8px;background:#fff2a0;border:0.36px solid #ecc64a;border-radius:0.7px;"></div>
<div class="a t" style="top:290.60px;height:6px;line-height:6px;font-size:3.2px;color:#b08c1e;left:98.10px;font-style:italic;font-weight:bold;">f</div>
<div class="a t" style="top:290.55px;height:6px;line-height:6px;font-size:3.78px;color:#000;left:103.10px;">Moving Average</div>
<div class="a" style="left:92.90px;top:299.40px;width:3.30px;height:0.24px;background:#d0d0d0;"></div>
<div class="a" style="left:96.30px;top:297.12px;width:4.8px;height:4.8px;background:#fff2a0;border:0.36px solid #ecc64a;border-radius:0.7px;"></div>
<div class="a t" style="top:296.57px;height:6px;line-height:6px;font-size:3.2px;color:#b08c1e;left:98.10px;font-style:italic;font-weight:bold;">f</div>
<div class="a t" style="top:296.52px;height:6px;line-height:6px;font-size:3.78px;color:#000;left:103.10px;">Parabolic SAR</div>
<div class="a" style="left:92.90px;top:305.37px;width:3.30px;height:0.24px;background:#d0d0d0;"></div>
<div class="a" style="left:96.30px;top:303.09px;width:4.8px;height:4.8px;background:#fff2a0;border:0.36px solid #ecc64a;border-radius:0.7px;"></div>
<div class="a t" style="top:302.54px;height:6px;line-height:6px;font-size:3.2px;color:#b08c1e;left:98.10px;font-style:italic;font-weight:bold;">f</div>
<div class="a t" style="top:302.49px;height:6px;line-height:6px;font-size:3.78px;color:#000;left:103.10px;">Standard Deviation</div>
<div class="a" style="left:85.0px;top:310.36px;width:2.2px;height:2.2px;border:0.3px solid #bbb;background:#fff;"></div>
<div class="a" style="left:85.60px;top:311.36px;width:1.00px;height:0.20px;background:#888;"></div>
<div class="a" style="left:89.90px;top:309.06px;width:4.8px;height:4.8px;background:#fff2a0;border:0.36px solid #ecc64a;border-radius:0.7px;"></div>
<div class="a t" style="top:308.51px;height:6px;line-height:6px;font-size:3.2px;color:#b08c1e;left:91.70px;font-style:italic;font-weight:bold;">f</div>
<div class="a t" style="top:308.46px;height:6px;line-height:6px;font-size:3.75px;color:#000;left:96.90px;">Oscillators</div>
<div class="a" style="left:92.90px;top:317.31px;width:3.30px;height:0.24px;background:#d0d0d0;"></div>
<div class="a" style="left:96.30px;top:315.03px;width:4.8px;height:4.8px;background:#fff2a0;border:0.36px solid #ecc64a;border-radius:0.7px;"></div>
<div class="a t" style="top:314.48px;height:6px;line-height:6px;font-size:3.2px;color:#b08c1e;left:98.10px;font-style:italic;font-weight:bold;">f</div>
<div class="a t" style="top:314.43px;height:6px;line-height:6px;font-size:3.78px;color:#000;left:103.10px;">Average True Range</div>
<div class="a" style="left:92.90px;top:323.28px;width:3.30px;height:0.24px;background:#d0d0d0;"></div>
<div class="a" style="left:96.30px;top:321.00px;width:4.8px;height:4.8px;background:#fff2a0;border:0.36px solid #ecc64a;border-radius:0.7px;"></div>
<div class="a t" style="top:320.45px;height:6px;line-height:6px;font-size:3.2px;color:#b08c1e;left:98.10px;font-style:italic;font-weight:bold;">f</div>
<div class="a t" style="top:320.40px;height:6px;line-height:6px;font-size:3.78px;color:#000;left:103.10px;">Bears Power</div>
<div class="a" style="left:92.90px;top:329.25px;width:3.30px;height:0.24px;background:#d0d0d0;"></div>
<div class="a" style="left:96.30px;top:326.97px;width:4.8px;height:4.8px;background:#fff2a0;border:0.36px solid #ecc64a;border-radius:0.7px;"></div>
<div class="a t" style="top:326.42px;height:6px;line-height:6px;font-size:3.2px;color:#b08c1e;left:98.10px;font-style:italic;font-weight:bold;">f</div>
<div class="a t" style="top:326.37px;height:6px;line-height:6px;font-size:3.78px;color:#000;left:103.10px;">Bulls Power</div>
<div class="a" style="left:92.90px;top:335.22px;width:3.30px;height:0.24px;background:#d0d0d0;"></div>
<div class="a" style="left:96.30px;top:332.94px;width:4.8px;height:4.8px;background:#fff2a0;border:0.36px solid #ecc64a;border-radius:0.7px;"></div>
<div class="a t" style="top:332.39px;height:6px;line-height:6px;font-size:3.2px;color:#b08c1e;left:98.10px;font-style:italic;font-weight:bold;">f</div>
<div class="a t" style="top:332.34px;height:6px;line-height:6px;font-size:3.78px;color:#000;left:103.10px;">Commodity Channel Index</div>
<div class="a" style="left:92.90px;top:341.19px;width:3.30px;height:0.24px;background:#d0d0d0;"></div>
<div class="a" style="left:96.30px;top:338.91px;width:4.8px;height:4.8px;background:#fff2a0;border:0.36px solid #ecc64a;border-radius:0.7px;"></div>
<div class="a t" style="top:338.36px;height:6px;line-height:6px;font-size:3.2px;color:#b08c1e;left:98.10px;font-style:italic;font-weight:bold;">f</div>
<div class="a t" style="top:338.31px;height:6px;line-height:6px;font-size:3.78px;color:#000;left:103.10px;">DeMarker</div>
<div class="a" style="left:92.90px;top:347.16px;width:3.30px;height:0.24px;background:#d0d0d0;"></div>
<div class="a" style="left:96.30px;top:344.88px;width:4.8px;height:4.8px;background:#fff2a0;border:0.36px solid #ecc64a;border-radius:0.7px;"></div>
<div class="a t" style="top:344.33px;height:6px;line-height:6px;font-size:3.2px;color:#b08c1e;left:98.10px;font-style:italic;font-weight:bold;">f</div>
<div class="a t" style="top:344.28px;height:6px;line-height:6px;font-size:3.78px;color:#000;left:103.10px;">Force Index</div>
<div class="a" style="left:92.90px;top:353.13px;width:3.30px;height:0.24px;background:#d0d0d0;"></div>
<div class="a" style="left:96.30px;top:350.85px;width:4.8px;height:4.8px;background:#fff2a0;border:0.36px solid #ecc64a;border-radius:0.7px;"></div>
<div class="a t" style="top:350.30px;height:6px;line-height:6px;font-size:3.2px;color:#b08c1e;left:98.10px;font-style:italic;font-weight:bold;">f</div>
<div class="a t" style="top:350.25px;height:6px;line-height:6px;font-size:3.78px;color:#000;left:103.10px;">MACD</div>
<div class="a" style="left:92.90px;top:359.10px;width:3.30px;height:0.24px;background:#d0d0d0;"></div>
<div class="a" style="left:96.30px;top:356.82px;width:4.8px;height:4.8px;background:#fff2a0;border:0.36px solid #ecc64a;border-radius:0.7px;"></div>
<div class="a t" style="top:356.27px;height:6px;line-height:6px;font-size:3.2px;color:#b08c1e;left:98.10px;font-style:italic;font-weight:bold;">f</div>
<div class="a t" style="top:356.22px;height:6px;line-height:6px;font-size:3.78px;color:#000;left:103.10px;">Momentum</div>
<div class="a" style="left:92.90px;top:365.07px;width:3.30px;height:0.24px;background:#d0d0d0;"></div>
<div class="a" style="left:96.30px;top:362.79px;width:4.8px;height:4.8px;background:#fff2a0;border:0.36px solid #ecc64a;border-radius:0.7px;"></div>
<div class="a t" style="top:362.24px;height:6px;line-height:6px;font-size:3.2px;color:#b08c1e;left:98.10px;font-style:italic;font-weight:bold;">f</div>
<div class="a t" style="top:362.19px;height:6px;line-height:6px;font-size:3.78px;color:#000;left:103.10px;">Moving Average of Oscillator</div>
<div class="a" style="left:92.80px;top:266.30px;width:0.25px;height:39.19px;background:#d4d4d4;"></div>
<div class="a" style="left:92.80px;top:314.06px;width:0.25px;height:51.13px;background:#d4d4d4;"></div>
<div class="a" style="left:213.40px;top:259.80px;width:4.60px;height:108.60px;background:#f1f1f1;"></div>
<div class="a" style="left:214.10px;top:272.90px;width:2.40px;height:19.50px;background:#8c8c8c;"></div>
<div class="a" style="left:76.30px;top:368.30px;width:141.70px;height:8.30px;background:#f0f0f0;"></div>
<div class="a" style="left:76.30px;top:368.20px;width:141.70px;height:0.35px;background:#a8a8a8;"></div>
<div class="a" style="left:76.80px;top:368.40px;width:21.70px;height:5.80px;background:#fff;border-right:0.3px solid #b0b0b0;border-bottom:0.3px solid #b0b0b0;"></div>
<div class="a t" style="top:368.80px;height:6px;line-height:6px;font-size:3.7px;color:#222;left:79.90px;">Common</div>
<div class="a" style="left:98.50px;top:368.60px;width:22.10px;height:5.30px;background:#f4f4f4;border-right:0.3px solid #b0b0b0;border-bottom:0.3px solid #b8b8b8;"></div>
<div class="a t" style="top:368.80px;height:6px;line-height:6px;font-size:3.7px;color:#777;left:102.00px;">Favorites</div>
<div class="a" style="left:218.00px;top:113.60px;width:1.40px;height:263.00px;background:#f0f0f0;"></div>
<div class="a" style="left:219.40px;top:113.60px;width:377.60px;height:255.80px;background:#000;"></div>
<svg width="672" height="449" viewBox="0 0 672 449"><line x1="575.00" y1="113.6" x2="575.00" y2="363.0" stroke="#565b62" stroke-width="0.45" stroke-dasharray="0.9 0.7"/>
<line x1="561.35" y1="113.6" x2="561.35" y2="363.0" stroke="#565b62" stroke-width="0.45" stroke-dasharray="0.9 0.7"/>
<line x1="547.70" y1="113.6" x2="547.70" y2="363.0" stroke="#565b62" stroke-width="0.45" stroke-dasharray="0.9 0.7"/>
<line x1="534.05" y1="113.6" x2="534.05" y2="363.0" stroke="#565b62" stroke-width="0.45" stroke-dasharray="0.9 0.7"/>
<line x1="520.40" y1="113.6" x2="520.40" y2="363.0" stroke="#565b62" stroke-width="0.45" stroke-dasharray="0.9 0.7"/>
<line x1="506.75" y1="113.6" x2="506.75" y2="363.0" stroke="#565b62" stroke-width="0.45" stroke-dasharray="0.9 0.7"/>
<line x1="493.10" y1="113.6" x2="493.10" y2="363.0" stroke="#565b62" stroke-width="0.45" stroke-dasharray="0.9 0.7"/>
<line x1="479.45" y1="113.6" x2="479.45" y2="363.0" stroke="#565b62" stroke-width="0.45" stroke-dasharray="0.9 0.7"/>
<line x1="465.80" y1="113.6" x2="465.80" y2="363.0" stroke="#565b62" stroke-width="0.45" stroke-dasharray="0.9 0.7"/>
<line x1="452.15" y1="113.6" x2="452.15" y2="363.0" stroke="#565b62" stroke-width="0.45" stroke-dasharray="0.9 0.7"/>
<line x1="438.50" y1="113.6" x2="438.50" y2="363.0" stroke="#565b62" stroke-width="0.45" stroke-dasharray="0.9 0.7"/>
<line x1="424.85" y1="113.6" x2="424.85" y2="363.0" stroke="#565b62" stroke-width="0.45" stroke-dasharray="0.9 0.7"/>
<line x1="411.20" y1="113.6" x2="411.20" y2="363.0" stroke="#565b62" stroke-width="0.45" stroke-dasharray="0.9 0.7"/>
<line x1="397.55" y1="113.6" x2="397.55" y2="363.0" stroke="#565b62" stroke-width="0.45" stroke-dasharray="0.9 0.7"/>
<line x1="383.90" y1="113.6" x2="383.90" y2="363.0" stroke="#565b62" stroke-width="0.45" stroke-dasharray="0.9 0.7"/>
<line x1="370.25" y1="113.6" x2="370.25" y2="363.0" stroke="#565b62" stroke-width="0.45" stroke-dasharray="0.9 0.7"/>
<line x1="356.60" y1="113.6" x2="356.60" y2="363.0" stroke="#565b62" stroke-width="0.45" stroke-dasharray="0.9 0.7"/>
<line x1="342.95" y1="113.6" x2="342.95" y2="363.0" stroke="#565b62" stroke-width="0.45" stroke-dasharray="0.9 0.7"/>
<line x1="329.30" y1="113.6" x2="329.30" y2="363.0" stroke="#565b62" stroke-width="0.45" stroke-dasharray="0.9 0.7"/>
<line x1="315.65" y1="113.6" x2="315.65" y2="363.0" stroke="#565b62" stroke-width="0.45" stroke-dasharray="0.9 0.7"/>
<line x1="302.00" y1="113.6" x2="302.00" y2="363.0" stroke="#565b62" stroke-width="0.45" stroke-dasharray="0.9 0.7"/>
<line x1="288.35" y1="113.6" x2="288.35" y2="363.0" stroke="#565b62" stroke-width="0.45" stroke-dasharray="0.9 0.7"/>
<line x1="274.70" y1="113.6" x2="274.70" y2="363.0" stroke="#565b62" stroke-width="0.45" stroke-dasharray="0.9 0.7"/>
<line x1="261.05" y1="113.6" x2="261.05" y2="363.0" stroke="#565b62" stroke-width="0.45" stroke-dasharray="0.9 0.7"/>
<line x1="247.40" y1="113.6" x2="247.40" y2="363.0" stroke="#565b62" stroke-width="0.45" stroke-dasharray="0.9 0.7"/>
<line x1="233.75" y1="113.6" x2="233.75" y2="363.0" stroke="#565b62" stroke-width="0.45" stroke-dasharray="0.9 0.7"/>
<line x1="219.4" y1="120.20" x2="583.4" y2="120.20" stroke="#565b62" stroke-width="0.45" stroke-dasharray="0.9 0.7"/>
<line x1="219.4" y1="136.70" x2="583.4" y2="136.70" stroke="#565b62" stroke-width="0.45" stroke-dasharray="0.9 0.7"/>
<line x1="219.4" y1="153.20" x2="583.4" y2="153.20" stroke="#565b62" stroke-width="0.45" stroke-dasharray="0.9 0.7"/>
<line x1="219.4" y1="169.70" x2="583.4" y2="169.70" stroke="#565b62" stroke-width="0.45" stroke-dasharray="0.9 0.7"/>
<line x1="219.4" y1="186.20" x2="583.4" y2="186.20" stroke="#565b62" stroke-width="0.45" stroke-dasharray="0.9 0.7"/>
<line x1="219.4" y1="202.70" x2="583.4" y2="202.70" stroke="#565b62" stroke-width="0.45" stroke-dasharray="0.9 0.7"/>
<line x1="219.4" y1="219.20" x2="583.4" y2="219.20" stroke="#565b62" stroke-width="0.45" stroke-dasharray="0.9 0.7"/>
<line x1="219.4" y1="235.70" x2="583.4" y2="235.70" stroke="#565b62" stroke-width="0.45" stroke-dasharray="0.9 0.7"/>
<line x1="219.4" y1="252.20" x2="583.4" y2="252.20" stroke="#565b62" stroke-width="0.45" stroke-dasharray="0.9 0.7"/>
<line x1="219.4" y1="268.70" x2="583.4" y2="268.70" stroke="#565b62" stroke-width="0.45" stroke-dasharray="0.9 0.7"/>
<line x1="219.4" y1="305.30" x2="583.4" y2="305.30" stroke="#565b62" stroke-width="0.45" stroke-dasharray="0.9 0.7"/>
<line x1="219.4" y1="338.30" x2="583.4" y2="338.30" stroke="#565b62" stroke-width="0.45" stroke-dasharray="0.9 0.7"/>
<line x1="219.8" y1="113.6" x2="219.8" y2="363.0" stroke="#8a8a8a" stroke-width="0.5"/>
<line x1="583.4" y1="113.6" x2="583.4" y2="363.0" stroke="#b8b8b8" stroke-width="0.5"/>
<line x1="219.4" y1="280.2" x2="583.4" y2="280.2" stroke="#c4c4c4" stroke-width="0.7"/>
<line x1="219.4" y1="363.0" x2="584.4" y2="363.0" stroke="#b8b8b8" stroke-width="0.55"/>
<line x1="219.4" y1="265.8" x2="583.4" y2="265.8" stroke="#6f7780" stroke-width="0.45"/>
<line x1="581.83" y1="210.4" x2="581.83" y2="193.3" stroke="#e0d0e2" stroke-width="0.75"/>
<line x1="578.41" y1="210.7" x2="578.41" y2="193.3" stroke="#e0d0e2" stroke-width="0.75"/>
<line x1="575.00" y1="212.5" x2="575.00" y2="193.3" stroke="#e0d0e2" stroke-width="0.75"/>
<line x1="571.59" y1="215.1" x2="571.59" y2="193.3" stroke="#e0d0e2" stroke-width="0.75"/>
<line x1="568.17" y1="216.7" x2="568.17" y2="193.3" stroke="#e0d0e2" stroke-width="0.75"/>
<line x1="564.76" y1="215.8" x2="564.76" y2="193.3" stroke="#e0d0e2" stroke-width="0.75"/>
<line x1="561.35" y1="214.6" x2="561.35" y2="193.3" stroke="#e0d0e2" stroke-width="0.75"/>
<line x1="557.94" y1="211.2" x2="557.94" y2="193.3" stroke="#e0d0e2" stroke-width="0.75"/>
<line x1="554.52" y1="208.8" x2="554.52" y2="193.3" stroke="#e0d0e2" stroke-width="0.75"/>
<line x1="551.11" y1="206.9" x2="551.11" y2="193.3" stroke="#e0d0e2" stroke-width="0.75"/>
<line x1="547.70" y1="206.1" x2="547.70" y2="193.3" stroke="#e0d0e2" stroke-width="0.75"/>
<line x1="544.29" y1="205.9" x2="544.29" y2="193.3" stroke="#e0d0e2" stroke-width="0.75"/>
<line x1="540.88" y1="206.1" x2="540.88" y2="193.3" stroke="#e0d0e2" stroke-width="0.75"/>
<line x1="537.46" y1="206.6" x2="537.46" y2="193.3" stroke="#e0d0e2" stroke-width="0.75"/>
<line x1="534.05" y1="207.0" x2="534.05" y2="193.3" stroke="#e0d0e2" stroke-width="0.75"/>
<line x1="530.64" y1="207.6" x2="530.64" y2="193.3" stroke="#e0d0e2" stroke-width="0.75"/>
<line x1="527.23" y1="208.1" x2="527.23" y2="193.3" stroke="#e0d0e2" stroke-width="0.75"/>
<line x1="523.81" y1="208.3" x2="523.81" y2="193.3" stroke="#e0d0e2" stroke-width="0.75"/>
<line x1="520.40" y1="208.3" x2="520.40" y2="193.3" stroke="#e0d0e2" stroke-width="0.75"/>
<line x1="516.99" y1="208.1" x2="516.99" y2="193.3" stroke="#e0d0e2" stroke-width="0.75"/>
<line x1="513.58" y1="207.0" x2="513.58" y2="193.3" stroke="#e0d0e2" stroke-width="0.75"/>
<line x1="510.16" y1="204.2" x2="510.16" y2="193.3" stroke="#e0d0e2" stroke-width="0.75"/>
<line x1="506.75" y1="201.2" x2="506.75" y2="193.3" stroke="#e0d0e2" stroke-width="0.75"/>
<line x1="503.34" y1="199.5" x2="503.34" y2="193.2" stroke="#e0d0e2" stroke-width="0.75"/>
<line x1="499.93" y1="197.3" x2="499.93" y2="192.8" stroke="#e0d0e2" stroke-width="0.75"/>
<line x1="496.51" y1="194.8" x2="496.51" y2="191.6" stroke="#e0d0e2" stroke-width="0.75"/>
<line x1="493.10" y1="192.0" x2="493.10" y2="189.5" stroke="#e0d0e2" stroke-width="0.75"/>
<line x1="486.27" y1="178.9" x2="486.27" y2="173.8" stroke="#e0d0e2" stroke-width="0.75"/>
<line x1="482.86" y1="173.2" x2="482.86" y2="167.9" stroke="#e0d0e2" stroke-width="0.75"/>
<line x1="479.45" y1="170.4" x2="479.45" y2="164.8" stroke="#e0d0e2" stroke-width="0.75"/>
<line x1="476.04" y1="172.0" x2="476.04" y2="164.7" stroke="#e0d0e2" stroke-width="0.75"/>
<line x1="472.62" y1="172.2" x2="472.62" y2="164.7" stroke="#e0d0e2" stroke-width="0.75"/>
<line x1="469.21" y1="172.3" x2="469.21" y2="164.7" stroke="#e0d0e2" stroke-width="0.75"/>
<line x1="465.80" y1="172.7" x2="465.80" y2="164.7" stroke="#e0d0e2" stroke-width="0.75"/>
<line x1="462.39" y1="176.1" x2="462.39" y2="164.7" stroke="#e0d0e2" stroke-width="0.75"/>
<line x1="458.98" y1="178.3" x2="458.98" y2="164.7" stroke="#e0d0e2" stroke-width="0.75"/>
<line x1="455.56" y1="180.0" x2="455.56" y2="164.7" stroke="#e0d0e2" stroke-width="0.75"/>
<line x1="452.15" y1="180.0" x2="452.15" y2="164.7" stroke="#e0d0e2" stroke-width="0.75"/>
<line x1="448.74" y1="179.6" x2="448.74" y2="164.2" stroke="#e0d0e2" stroke-width="0.75"/>
<line x1="445.32" y1="177.5" x2="445.32" y2="160.9" stroke="#e0d0e2" stroke-width="0.75"/>
<line x1="441.91" y1="175.6" x2="441.91" y2="160.4" stroke="#e0d0e2" stroke-width="0.75"/>
<line x1="438.50" y1="174.8" x2="438.50" y2="161.4" stroke="#e0d0e2" stroke-width="0.75"/>
<line x1="435.09" y1="173.2" x2="435.09" y2="163.0" stroke="#e0d0e2" stroke-width="0.75"/>
<line x1="431.67" y1="169.5" x2="431.67" y2="164.7" stroke="#e0d0e2" stroke-width="0.75"/>
<line x1="428.26" y1="168.6" x2="428.26" y2="167.3" stroke="#e0d0e2" stroke-width="0.75"/>
<line x1="424.85" y1="168.6" x2="424.85" y2="167.3" stroke="#e0d0e2" stroke-width="0.75"/>
<line x1="421.44" y1="168.6" x2="421.44" y2="167.3" stroke="#e0d0e2" stroke-width="0.75"/>
<line x1="418.02" y1="168.6" x2="418.02" y2="167.3" stroke="#e0d0e2" stroke-width="0.75"/>
<line x1="414.61" y1="168.6" x2="414.61" y2="167.3" stroke="#e0d0e2" stroke-width="0.75"/>
<line x1="411.20" y1="168.6" x2="411.20" y2="167.3" stroke="#e0d0e2" stroke-width="0.75"/>
<line x1="407.79" y1="168.6" x2="407.79" y2="166.9" stroke="#e0d0e2" stroke-width="0.75"/>
<line x1="404.38" y1="168.4" x2="404.38" y2="166.4" stroke="#e0d0e2" stroke-width="0.75"/>
<line x1="400.96" y1="168.2" x2="400.96" y2="166.7" stroke="#e0d0e2" stroke-width="0.75"/>
<line x1="397.55" y1="168.0" x2="397.55" y2="167.0" stroke="#e0d0e2" stroke-width="0.75"/>
<line x1="394.14" y1="168.0" x2="394.14" y2="167.0" stroke="#e0d0e2" stroke-width="0.75"/>
<line x1="390.73" y1="168.0" x2="390.73" y2="167.0" stroke="#e0d0e2" stroke-width="0.75"/>
<line x1="387.31" y1="168.0" x2="387.31" y2="166.8" stroke="#e0d0e2" stroke-width="0.75"/>
<line x1="383.90" y1="167.6" x2="383.90" y2="165.0" stroke="#e0d0e2" stroke-width="0.75"/>
<line x1="380.49" y1="167.2" x2="380.49" y2="165.2" stroke="#e0d0e2" stroke-width="0.75"/>
<line x1="377.07" y1="166.8" x2="377.07" y2="165.6" stroke="#e0d0e2" stroke-width="0.75"/>
<line x1="356.60" y1="165.1" x2="356.60" y2="170.6" stroke="#f2b183" stroke-width="0.75"/>
<line x1="353.19" y1="163.6" x2="353.19" y2="175.0" stroke="#f2b183" stroke-width="0.75"/>
<line x1="349.77" y1="162.9" x2="349.77" y2="175.0" stroke="#f2b183" stroke-width="0.75"/>
<line x1="346.36" y1="162.5" x2="346.36" y2="175.0" stroke="#f2b183" stroke-width="0.75"/>
<line x1="342.95" y1="162.5" x2="342.95" y2="175.0" stroke="#f2b183" stroke-width="0.75"/>
<line x1="339.54" y1="162.5" x2="339.54" y2="175.0" stroke="#f2b183" stroke-width="0.75"/>
<line x1="336.12" y1="160.8" x2="336.12" y2="175.0" stroke="#f2b183" stroke-width="0.75"/>
<line x1="332.71" y1="157.4" x2="332.71" y2="175.0" stroke="#f2b183" stroke-width="0.75"/>
<line x1="329.30" y1="156.8" x2="329.30" y2="175.0" stroke="#f2b183" stroke-width="0.75"/>
<line x1="325.89" y1="158.0" x2="325.89" y2="175.0" stroke="#f2b183" stroke-width="0.75"/>
<line x1="322.48" y1="159.9" x2="322.48" y2="174.8" stroke="#f2b183" stroke-width="0.75"/>
<line x1="319.06" y1="162.1" x2="319.06" y2="174.6" stroke="#f2b183" stroke-width="0.75"/>
<line x1="315.65" y1="164.2" x2="315.65" y2="175.7" stroke="#f2b183" stroke-width="0.75"/>
<line x1="312.24" y1="163.7" x2="312.24" y2="176.7" stroke="#f2b183" stroke-width="0.75"/>
<line x1="308.82" y1="163.3" x2="308.82" y2="176.7" stroke="#f2b183" stroke-width="0.75"/>
<line x1="305.41" y1="164.1" x2="305.41" y2="176.7" stroke="#f2b183" stroke-width="0.75"/>
<line x1="302.00" y1="164.9" x2="302.00" y2="177.9" stroke="#f2b183" stroke-width="0.75"/>
<line x1="298.59" y1="178.6" x2="298.59" y2="190.3" stroke="#f2b183" stroke-width="0.75"/>
<line x1="295.18" y1="180.9" x2="295.18" y2="192.5" stroke="#f2b183" stroke-width="0.75"/>
<line x1="291.76" y1="182.1" x2="291.76" y2="193.6" stroke="#f2b183" stroke-width="0.75"/>
<line x1="288.35" y1="182.8" x2="288.35" y2="194.1" stroke="#f2b183" stroke-width="0.75"/>
<line x1="284.94" y1="183.5" x2="284.94" y2="194.6" stroke="#f2b183" stroke-width="0.75"/>
<line x1="281.52" y1="184.3" x2="281.52" y2="195.4" stroke="#f2b183" stroke-width="0.75"/>
<line x1="278.11" y1="185.2" x2="278.11" y2="197.1" stroke="#f2b183" stroke-width="0.75"/>
<line x1="274.70" y1="186.4" x2="274.70" y2="199.3" stroke="#f2b183" stroke-width="0.75"/>
<line x1="271.29" y1="188.6" x2="271.29" y2="202.7" stroke="#f2b183" stroke-width="0.75"/>
<line x1="267.88" y1="190.9" x2="267.88" y2="205.0" stroke="#f2b183" stroke-width="0.75"/>
<line x1="264.46" y1="193.9" x2="264.46" y2="207.3" stroke="#f2b183" stroke-width="0.75"/>
<line x1="261.05" y1="200.2" x2="261.05" y2="211.9" stroke="#f2b183" stroke-width="0.75"/>
<line x1="257.64" y1="201.0" x2="257.64" y2="211.3" stroke="#f2b183" stroke-width="0.75"/>
<line x1="254.22" y1="201.1" x2="254.22" y2="211.2" stroke="#f2b183" stroke-width="0.75"/>
<line x1="250.81" y1="201.3" x2="250.81" y2="211.2" stroke="#f2b183" stroke-width="0.75"/>
<line x1="247.40" y1="201.5" x2="247.40" y2="211.2" stroke="#f2b183" stroke-width="0.75"/>
<line x1="243.99" y1="201.7" x2="243.99" y2="211.1" stroke="#f2b183" stroke-width="0.75"/>
<line x1="240.57" y1="202.1" x2="240.57" y2="211.1" stroke="#f2b183" stroke-width="0.75"/>
<line x1="237.16" y1="202.4" x2="237.16" y2="211.0" stroke="#f2b183" stroke-width="0.75"/>
<line x1="233.75" y1="202.8" x2="233.75" y2="211.0" stroke="#f2b183" stroke-width="0.75"/>
<line x1="230.34" y1="203.2" x2="230.34" y2="210.9" stroke="#f2b183" stroke-width="0.75"/>
<line x1="226.93" y1="202.9" x2="226.93" y2="210.9" stroke="#f2b183" stroke-width="0.75"/>
<line x1="223.51" y1="202.3" x2="223.51" y2="210.8" stroke="#f2b183" stroke-width="0.75"/>
<polyline points="219.8,201.7 229.0,203.3 244.0,201.7 260.7,200.8 264.8,193.3 269.0,190.0 275.7,185.8 285.7,183.3 294.0,181.7 299.0,178.3 301.5,165.0 309.0,163.3 315.7,164.2 322.3,160.0 325.0,158.3 330.8,156.3 334.2,158.3 337.5,162.5 346.7,162.5 352.5,163.3 358.3,165.8 360.8,166.7 375.0,166.6 387.5,168.0 398.3,168.0 408.3,168.6 428.3,168.6 431.0,168.8 436.0,174.2 442.7,175.8 449.3,180.0 456.0,180.0 461.8,176.7 466.0,172.5 476.0,172.0 480.2,170.0 484.3,175.0 487.7,181.7 489.3,186.7 492.7,191.7 497.7,195.8 502.7,199.2 507.7,201.7 512.7,206.7 517.7,208.3 526.0,208.3 534.3,207.0 542.8,205.8 550.0,206.3 556.7,210.0 561.7,215.0 568.3,216.7 573.3,214.2 576.7,210.8 583.3,210.3" fill="none" stroke="#f4b184" stroke-width="0.75" stroke-linejoin="round" stroke-linecap="round" />
<polyline points="219.8,210.8 259.0,211.3 261.5,212.0 263.2,208.3 266.5,205.8 270.7,203.3 275.7,198.3 282.3,195.0 294.0,193.3 299.0,190.0 302.3,176.7 312.3,176.7 319.0,174.6 325.0,175.0 353.3,175.0 358.3,168.3 360.8,166.7 375.0,165.8 382.5,165.0 385.0,165.0 387.5,167.0 398.3,167.0 405.0,166.3 410.0,167.3 428.3,167.3 431.0,165.0 436.0,162.5 441.0,160.3 445.2,160.8 449.3,164.7 479.3,164.7 484.3,169.2 486.8,175.0 488.5,185.0 490.2,188.3 494.3,190.0 497.7,192.5 504.3,193.3 583.3,193.3" fill="none" stroke="#eadcea" stroke-width="0.75" stroke-linejoin="round" stroke-linecap="round" />
<line x1="227.20" y1="138.8" x2="227.20" y2="151.0" stroke="#0e8a0e" stroke-width="0.35"/>
<rect x="226.30" y="141.0" width="1.8" height="8.0" fill="#020a02" stroke="#0c6e0c" stroke-width="0.35"/>
<line x1="230.60" y1="142.8" x2="230.60" y2="153.0" stroke="#0e8a0e" stroke-width="0.35"/>
<rect x="229.70" y="145.0" width="1.8" height="6.0" fill="#020a02" stroke="#0c6e0c" stroke-width="0.35"/>
<line x1="241.00" y1="149.8" x2="241.00" y2="162.0" stroke="#0e8a0e" stroke-width="0.35"/>
<rect x="240.10" y="152.0" width="1.8" height="8.0" fill="#020a02" stroke="#0c6e0c" stroke-width="0.35"/>
<line x1="254.40" y1="165.8" x2="254.40" y2="180.0" stroke="#0e8a0e" stroke-width="0.35"/>
<rect x="253.50" y="168.0" width="1.8" height="10.0" fill="#020a02" stroke="#0c6e0c" stroke-width="0.35"/>
<line x1="257.80" y1="163.8" x2="257.80" y2="178.0" stroke="#0e8a0e" stroke-width="0.35"/>
<rect x="256.90" y="166.0" width="1.8" height="10.0" fill="#020a02" stroke="#0c6e0c" stroke-width="0.35"/>
<line x1="268.30" y1="169.8" x2="268.30" y2="183.0" stroke="#0e8a0e" stroke-width="0.35"/>
<rect x="267.40" y="172.0" width="1.8" height="9.0" fill="#020a02" stroke="#0c6e0c" stroke-width="0.35"/>
<line x1="271.70" y1="162.8" x2="271.70" y2="178.0" stroke="#0e8a0e" stroke-width="0.35"/>
<rect x="270.80" y="165.0" width="1.8" height="11.0" fill="#020a02" stroke="#0c6e0c" stroke-width="0.35"/>
<line x1="278.60" y1="157.8" x2="278.60" y2="170.0" stroke="#0e8a0e" stroke-width="0.35"/>
<rect x="277.70" y="160.0" width="1.8" height="8.0" fill="#020a02" stroke="#0c6e0c" stroke-width="0.35"/>
<line x1="281.90" y1="155.8" x2="281.90" y2="167.0" stroke="#0e8a0e" stroke-width="0.35"/>
<rect x="281.00" y="158.0" width="1.8" height="7.0" fill="#020a02" stroke="#0c6e0c" stroke-width="0.35"/>
<line x1="291.70" y1="159.8" x2="291.70" y2="174.0" stroke="#0e8a0e" stroke-width="0.35"/>
<rect x="290.80" y="162.0" width="1.8" height="10.0" fill="#020a02" stroke="#0c6e0c" stroke-width="0.35"/>
<line x1="302.90" y1="163.8" x2="302.90" y2="184.0" stroke="#0e8a0e" stroke-width="0.35"/>
<rect x="302.00" y="166.0" width="1.8" height="16.0" fill="#020a02" stroke="#0c6e0c" stroke-width="0.35"/>
<line x1="306.30" y1="155.8" x2="306.30" y2="170.0" stroke="#0e8a0e" stroke-width="0.35"/>
<rect x="305.40" y="158.0" width="1.8" height="10.0" fill="#020a02" stroke="#0c6e0c" stroke-width="0.35"/>
<line x1="309.70" y1="153.8" x2="309.70" y2="164.0" stroke="#0e8a0e" stroke-width="0.35"/>
<rect x="308.80" y="156.0" width="1.8" height="6.0" fill="#020a02" stroke="#0c6e0c" stroke-width="0.35"/>
<line x1="312.60" y1="145.8" x2="312.60" y2="160.0" stroke="#0e8a0e" stroke-width="0.35"/>
<rect x="311.70" y="148.0" width="1.8" height="10.0" fill="#020a02" stroke="#0c6e0c" stroke-width="0.35"/>
<line x1="329.60" y1="173.8" x2="329.60" y2="192.0" stroke="#0e8a0e" stroke-width="0.35"/>
<rect x="328.70" y="176.0" width="1.8" height="14.0" fill="#020a02" stroke="#0c6e0c" stroke-width="0.35"/>
<line x1="333.00" y1="173.8" x2="333.00" y2="188.0" stroke="#0e8a0e" stroke-width="0.35"/>
<rect x="332.10" y="176.0" width="1.8" height="10.0" fill="#020a02" stroke="#0c6e0c" stroke-width="0.35"/>
<line x1="343.00" y1="179.8" x2="343.00" y2="190.0" stroke="#0e8a0e" stroke-width="0.35"/>
<rect x="342.10" y="182.0" width="1.8" height="6.0" fill="#020a02" stroke="#0c6e0c" stroke-width="0.35"/>
<line x1="346.50" y1="177.8" x2="346.50" y2="188.0" stroke="#0e8a0e" stroke-width="0.35"/>
<rect x="345.60" y="180.0" width="1.8" height="6.0" fill="#020a02" stroke="#0c6e0c" stroke-width="0.35"/>
<line x1="350.00" y1="182.8" x2="350.00" y2="192.0" stroke="#0e8a0e" stroke-width="0.35"/>
<rect x="349.10" y="185.0" width="1.8" height="5.0" fill="#020a02" stroke="#0c6e0c" stroke-width="0.35"/>
<line x1="360.20" y1="177.8" x2="360.20" y2="202.0" stroke="#0e8a0e" stroke-width="0.35"/>
<rect x="359.30" y="180.0" width="1.8" height="20.0" fill="#020a02" stroke="#0c6e0c" stroke-width="0.35"/>
<line x1="363.60" y1="173.8" x2="363.60" y2="192.0" stroke="#0e8a0e" stroke-width="0.35"/>
<rect x="362.70" y="176.0" width="1.8" height="14.0" fill="#020a02" stroke="#0c6e0c" stroke-width="0.35"/>
<line x1="367.00" y1="169.8" x2="367.00" y2="186.0" stroke="#0e8a0e" stroke-width="0.35"/>
<rect x="366.10" y="172.0" width="1.8" height="12.0" fill="#020a02" stroke="#0c6e0c" stroke-width="0.35"/>
<line x1="370.40" y1="163.8" x2="370.40" y2="180.0" stroke="#0e8a0e" stroke-width="0.35"/>
<rect x="369.50" y="166.0" width="1.8" height="12.0" fill="#020a02" stroke="#0c6e0c" stroke-width="0.35"/>
<line x1="373.80" y1="157.8" x2="373.80" y2="174.0" stroke="#0e8a0e" stroke-width="0.35"/>
<rect x="372.90" y="160.0" width="1.8" height="12.0" fill="#020a02" stroke="#0c6e0c" stroke-width="0.35"/>
<line x1="377.30" y1="143.8" x2="377.30" y2="165.0" stroke="#0e8a0e" stroke-width="0.35"/>
<rect x="376.40" y="146.0" width="1.8" height="17.0" fill="#020a02" stroke="#0c6e0c" stroke-width="0.35"/>
<line x1="387.20" y1="169.8" x2="387.20" y2="179.0" stroke="#0e8a0e" stroke-width="0.35"/>
<rect x="386.30" y="172.0" width="1.8" height="5.0" fill="#020a02" stroke="#0c6e0c" stroke-width="0.35"/>
<line x1="397.60" y1="179.8" x2="397.60" y2="202.0" stroke="#0e8a0e" stroke-width="0.35"/>
<rect x="396.70" y="182.0" width="1.8" height="18.0" fill="#020a02" stroke="#0c6e0c" stroke-width="0.35"/>
<line x1="404.20" y1="209.8" x2="404.20" y2="234.0" stroke="#0e8a0e" stroke-width="0.35"/>
<rect x="403.30" y="212.0" width="1.8" height="20.0" fill="#020a02" stroke="#0c6e0c" stroke-width="0.35"/>
<line x1="407.60" y1="208.8" x2="407.60" y2="228.0" stroke="#0e8a0e" stroke-width="0.35"/>
<rect x="406.70" y="211.0" width="1.8" height="15.0" fill="#020a02" stroke="#0c6e0c" stroke-width="0.35"/>
<line x1="421.10" y1="221.8" x2="421.10" y2="234.0" stroke="#0e8a0e" stroke-width="0.35"/>
<rect x="420.20" y="224.0" width="1.8" height="8.0" fill="#020a02" stroke="#0c6e0c" stroke-width="0.35"/>
<line x1="428.00" y1="227.8" x2="428.00" y2="241.0" stroke="#0e8a0e" stroke-width="0.35"/>
<rect x="427.10" y="230.0" width="1.8" height="9.0" fill="#020a02" stroke="#0c6e0c" stroke-width="0.35"/>
<line x1="431.40" y1="219.8" x2="431.40" y2="234.0" stroke="#0e8a0e" stroke-width="0.35"/>
<rect x="430.50" y="222.0" width="1.8" height="10.0" fill="#020a02" stroke="#0c6e0c" stroke-width="0.35"/>
<line x1="434.80" y1="201.8" x2="434.80" y2="216.0" stroke="#0e8a0e" stroke-width="0.35"/>
<rect x="433.90" y="204.0" width="1.8" height="10.0" fill="#020a02" stroke="#0c6e0c" stroke-width="0.35"/>
<line x1="438.30" y1="203.8" x2="438.30" y2="224.0" stroke="#0e8a0e" stroke-width="0.35"/>
<rect x="437.40" y="206.0" width="1.8" height="16.0" fill="#020a02" stroke="#0c6e0c" stroke-width="0.35"/>
<line x1="445.40" y1="215.8" x2="445.40" y2="228.0" stroke="#0e8a0e" stroke-width="0.35"/>
<rect x="444.50" y="218.0" width="1.8" height="8.0" fill="#020a02" stroke="#0c6e0c" stroke-width="0.35"/>
<line x1="452.30" y1="217.8" x2="452.30" y2="230.0" stroke="#0e8a0e" stroke-width="0.35"/>
<rect x="451.40" y="220.0" width="1.8" height="8.0" fill="#020a02" stroke="#0c6e0c" stroke-width="0.35"/>
<line x1="459.00" y1="219.8" x2="459.00" y2="233.0" stroke="#0e8a0e" stroke-width="0.35"/>
<rect x="458.10" y="222.0" width="1.8" height="9.0" fill="#020a02" stroke="#0c6e0c" stroke-width="0.35"/>
<line x1="466.00" y1="215.8" x2="466.00" y2="232.0" stroke="#0e8a0e" stroke-width="0.35"/>
<rect x="465.10" y="218.0" width="1.8" height="12.0" fill="#020a02" stroke="#0c6e0c" stroke-width="0.35"/>
<line x1="469.30" y1="211.8" x2="469.30" y2="228.0" stroke="#0e8a0e" stroke-width="0.35"/>
<rect x="468.40" y="214.0" width="1.8" height="12.0" fill="#020a02" stroke="#0c6e0c" stroke-width="0.35"/>
<line x1="476.00" y1="213.8" x2="476.00" y2="228.0" stroke="#0e8a0e" stroke-width="0.35"/>
<rect x="475.10" y="216.0" width="1.8" height="10.0" fill="#020a02" stroke="#0c6e0c" stroke-width="0.35"/>
<line x1="479.40" y1="205.8" x2="479.40" y2="226.0" stroke="#0e8a0e" stroke-width="0.35"/>
<rect x="478.50" y="208.0" width="1.8" height="16.0" fill="#020a02" stroke="#0c6e0c" stroke-width="0.35"/>
<line x1="483.00" y1="193.8" x2="483.00" y2="216.0" stroke="#0e8a0e" stroke-width="0.35"/>
<rect x="482.10" y="196.0" width="1.8" height="18.0" fill="#020a02" stroke="#0c6e0c" stroke-width="0.35"/>
<line x1="486.30" y1="187.8" x2="486.30" y2="206.0" stroke="#0e8a0e" stroke-width="0.35"/>
<rect x="485.40" y="190.0" width="1.8" height="14.0" fill="#020a02" stroke="#0c6e0c" stroke-width="0.35"/>
<line x1="496.60" y1="185.8" x2="496.60" y2="206.0" stroke="#0e8a0e" stroke-width="0.35"/>
<rect x="495.70" y="188.0" width="1.8" height="16.0" fill="#020a02" stroke="#0c6e0c" stroke-width="0.35"/>
<line x1="500.00" y1="183.8" x2="500.00" y2="202.0" stroke="#0e8a0e" stroke-width="0.35"/>
<rect x="499.10" y="186.0" width="1.8" height="14.0" fill="#020a02" stroke="#0c6e0c" stroke-width="0.35"/>
<line x1="503.40" y1="182.8" x2="503.40" y2="200.0" stroke="#0e8a0e" stroke-width="0.35"/>
<rect x="502.50" y="185.0" width="1.8" height="13.0" fill="#020a02" stroke="#0c6e0c" stroke-width="0.35"/>
<line x1="517.00" y1="243.8" x2="517.00" y2="262.0" stroke="#0e8a0e" stroke-width="0.35"/>
<rect x="516.10" y="246.0" width="1.8" height="14.0" fill="#020a02" stroke="#0c6e0c" stroke-width="0.35"/>
<line x1="523.80" y1="249.8" x2="523.80" y2="260.0" stroke="#0e8a0e" stroke-width="0.35"/>
<rect x="522.90" y="252.0" width="1.8" height="6.0" fill="#020a02" stroke="#0c6e0c" stroke-width="0.35"/>
<line x1="527.20" y1="251.8" x2="527.20" y2="262.0" stroke="#0e8a0e" stroke-width="0.35"/>
<rect x="526.30" y="254.0" width="1.8" height="6.0" fill="#020a02" stroke="#0c6e0c" stroke-width="0.35"/>
<line x1="534.00" y1="247.8" x2="534.00" y2="260.0" stroke="#0e8a0e" stroke-width="0.35"/>
<rect x="533.10" y="250.0" width="1.8" height="8.0" fill="#020a02" stroke="#0c6e0c" stroke-width="0.35"/>
<line x1="537.50" y1="239.8" x2="537.50" y2="258.0" stroke="#0e8a0e" stroke-width="0.35"/>
<rect x="536.60" y="242.0" width="1.8" height="14.0" fill="#020a02" stroke="#0c6e0c" stroke-width="0.35"/>
<line x1="540.80" y1="235.8" x2="540.80" y2="252.0" stroke="#0e8a0e" stroke-width="0.35"/>
<rect x="539.90" y="238.0" width="1.8" height="12.0" fill="#020a02" stroke="#0c6e0c" stroke-width="0.35"/>
<line x1="547.70" y1="239.8" x2="547.70" y2="254.0" stroke="#0e8a0e" stroke-width="0.35"/>
<rect x="546.80" y="242.0" width="1.8" height="10.0" fill="#020a02" stroke="#0c6e0c" stroke-width="0.35"/>
<line x1="551.00" y1="237.8" x2="551.00" y2="252.0" stroke="#0e8a0e" stroke-width="0.35"/>
<rect x="550.10" y="240.0" width="1.8" height="10.0" fill="#020a02" stroke="#0c6e0c" stroke-width="0.35"/>
<line x1="554.40" y1="230.8" x2="554.40" y2="256.0" stroke="#0e8a0e" stroke-width="0.35"/>
<rect x="553.50" y="233.0" width="1.8" height="21.0" fill="#020a02" stroke="#0c6e0c" stroke-width="0.35"/>
<line x1="568.20" y1="249.8" x2="568.20" y2="260.0" stroke="#0e8a0e" stroke-width="0.35"/>
<rect x="567.30" y="252.0" width="1.8" height="6.0" fill="#020a02" stroke="#0c6e0c" stroke-width="0.35"/>
<line x1="575.00" y1="261.8" x2="575.00" y2="270.0" stroke="#0e8a0e" stroke-width="0.35"/>
<rect x="574.10" y="264.0" width="1.8" height="4.0" fill="#020a02" stroke="#0c6e0c" stroke-width="0.35"/>
<line x1="223.70" y1="138.0" x2="223.70" y2="149.9" stroke="#18c018" stroke-width="0.45"/>
<line x1="234.00" y1="144.7" x2="234.00" y2="152.4" stroke="#18c018" stroke-width="0.45"/>
<line x1="237.80" y1="149.7" x2="237.80" y2="164.1" stroke="#18c018" stroke-width="0.45"/>
<line x1="244.00" y1="153.8" x2="244.00" y2="162.4" stroke="#18c018" stroke-width="0.45"/>
<line x1="247.70" y1="159.7" x2="247.70" y2="179.1" stroke="#18c018" stroke-width="0.45"/>
<line x1="251.00" y1="173.0" x2="251.00" y2="179.1" stroke="#18c018" stroke-width="0.45"/>
<line x1="261.20" y1="164.7" x2="261.20" y2="177.4" stroke="#18c018" stroke-width="0.45"/>
<line x1="264.80" y1="171.3" x2="264.80" y2="182.4" stroke="#18c018" stroke-width="0.45"/>
<line x1="275.20" y1="160.5" x2="275.20" y2="173.3" stroke="#18c018" stroke-width="0.45"/>
<line x1="284.80" y1="156.3" x2="284.80" y2="163.3" stroke="#18c018" stroke-width="0.45"/>
<line x1="288.20" y1="158.8" x2="288.20" y2="169.9" stroke="#18c018" stroke-width="0.45"/>
<line x1="295.30" y1="171.3" x2="295.30" y2="182.4" stroke="#18c018" stroke-width="0.45"/>
<line x1="299.50" y1="174.7" x2="299.50" y2="188.3" stroke="#18c018" stroke-width="0.45"/>
<line x1="315.70" y1="145.5" x2="315.70" y2="164.9" stroke="#18c018" stroke-width="0.45"/>
<line x1="319.00" y1="168.8" x2="319.00" y2="175.8" stroke="#18c018" stroke-width="0.45"/>
<line x1="322.30" y1="170.5" x2="322.30" y2="180.8" stroke="#18c018" stroke-width="0.45"/>
<line x1="326.20" y1="176.8" x2="326.20" y2="188.3" stroke="#18c018" stroke-width="0.45"/>
<line x1="336.30" y1="173.8" x2="336.30" y2="189.9" stroke="#18c018" stroke-width="0.45"/>
<line x1="356.70" y1="182.2" x2="356.70" y2="194.1" stroke="#18c018" stroke-width="0.45"/>
<line x1="380.80" y1="153.0" x2="380.80" y2="163.3" stroke="#18c018" stroke-width="0.45"/>
<line x1="383.70" y1="163.0" x2="383.70" y2="176.6" stroke="#18c018" stroke-width="0.45"/>
<line x1="390.80" y1="173.0" x2="390.80" y2="180.8" stroke="#18c018" stroke-width="0.45"/>
<line x1="394.20" y1="177.2" x2="394.20" y2="205.6" stroke="#18c018" stroke-width="0.45"/>
<line x1="400.80" y1="208.0" x2="400.80" y2="240.8" stroke="#18c018" stroke-width="0.45"/>
<line x1="410.80" y1="209.7" x2="410.80" y2="215.8" stroke="#18c018" stroke-width="0.45"/>
<line x1="415.00" y1="212.0" x2="415.00" y2="217.6" stroke="#18c018" stroke-width="0.45"/>
<line x1="417.50" y1="214.7" x2="417.50" y2="230.8" stroke="#18c018" stroke-width="0.45"/>
<line x1="424.70" y1="223.0" x2="424.70" y2="237.4" stroke="#18c018" stroke-width="0.45"/>
<line x1="441.80" y1="197.0" x2="441.80" y2="229.1" stroke="#18c018" stroke-width="0.45"/>
<line x1="449.00" y1="213.0" x2="449.00" y2="222.4" stroke="#18c018" stroke-width="0.45"/>
<line x1="455.70" y1="217.2" x2="455.70" y2="229.1" stroke="#18c018" stroke-width="0.45"/>
<line x1="462.30" y1="222.2" x2="462.30" y2="230.8" stroke="#18c018" stroke-width="0.45"/>
<line x1="472.70" y1="213.8" x2="472.70" y2="225.8" stroke="#18c018" stroke-width="0.45"/>
<line x1="489.70" y1="188.0" x2="489.70" y2="202.4" stroke="#18c018" stroke-width="0.45"/>
<line x1="493.20" y1="199.7" x2="493.20" y2="207.4" stroke="#18c018" stroke-width="0.45"/>
<line x1="506.80" y1="198.8" x2="506.80" y2="233.3" stroke="#18c018" stroke-width="0.45"/>
<line x1="510.20" y1="228.0" x2="510.20" y2="242.4" stroke="#18c018" stroke-width="0.45"/>
<line x1="513.60" y1="240.5" x2="513.60" y2="258.6" stroke="#18c018" stroke-width="0.45"/>
<line x1="520.40" y1="244.7" x2="520.40" y2="258.3" stroke="#18c018" stroke-width="0.45"/>
<line x1="530.60" y1="255.5" x2="530.60" y2="261.4" stroke="#18c018" stroke-width="0.45"/>
<line x1="544.20" y1="242.7" x2="544.20" y2="248.3" stroke="#18c018" stroke-width="0.45"/>
<line x1="557.80" y1="236.3" x2="557.80" y2="242.9" stroke="#18c018" stroke-width="0.45"/>
<line x1="561.20" y1="239.7" x2="561.20" y2="257.4" stroke="#18c018" stroke-width="0.45"/>
<line x1="564.70" y1="252.2" x2="564.70" y2="261.6" stroke="#18c018" stroke-width="0.45"/>
<line x1="571.70" y1="253.8" x2="571.70" y2="268.3" stroke="#18c018" stroke-width="0.45"/>
<rect x="222.70" y="140.0" width="2.0" height="8.3" fill="#fbfffb"/>
<rect x="233.00" y="146.7" width="2.0" height="4.1" fill="#fbfffb"/>
<rect x="236.80" y="151.7" width="2.0" height="10.8" fill="#fbfffb"/>
<rect x="243.00" y="155.8" width="2.0" height="5.0" fill="#fbfffb"/>
<rect x="246.70" y="161.7" width="2.0" height="15.8" fill="#fbfffb"/>
<rect x="250.00" y="175.0" width="2.0" height="2.5" fill="#fbfffb"/>
<rect x="260.20" y="166.7" width="2.0" height="9.1" fill="#fbfffb"/>
<rect x="263.80" y="173.3" width="2.0" height="7.5" fill="#fbfffb"/>
<rect x="274.20" y="162.5" width="2.0" height="9.2" fill="#fbfffb"/>
<rect x="283.80" y="158.3" width="2.0" height="3.4" fill="#fbfffb"/>
<rect x="287.20" y="160.8" width="2.0" height="7.5" fill="#fbfffb"/>
<rect x="294.30" y="173.3" width="2.0" height="7.5" fill="#fbfffb"/>
<rect x="298.50" y="176.7" width="2.0" height="10.0" fill="#fbfffb"/>
<rect x="314.70" y="147.5" width="2.0" height="15.8" fill="#fbfffb"/>
<rect x="318.00" y="170.8" width="2.0" height="3.4" fill="#fbfffb"/>
<rect x="321.30" y="172.5" width="2.0" height="6.7" fill="#fbfffb"/>
<rect x="325.20" y="178.8" width="2.0" height="7.9" fill="#fbfffb"/>
<rect x="335.30" y="175.8" width="2.0" height="12.5" fill="#fbfffb"/>
<rect x="355.70" y="184.2" width="2.0" height="8.3" fill="#fbfffb"/>
<rect x="379.80" y="155.0" width="2.0" height="6.7" fill="#fbfffb"/>
<rect x="382.70" y="165.0" width="2.0" height="10.0" fill="#fbfffb"/>
<rect x="389.80" y="175.0" width="2.0" height="4.2" fill="#fbfffb"/>
<rect x="393.20" y="179.2" width="2.0" height="24.8" fill="#fbfffb"/>
<rect x="399.80" y="210.0" width="2.0" height="29.2" fill="#fbfffb"/>
<rect x="409.80" y="211.7" width="2.0" height="2.5" fill="#fbfffb"/>
<rect x="414.00" y="214.0" width="2.0" height="2.0" fill="#fbfffb"/>
<rect x="416.50" y="216.7" width="2.0" height="12.5" fill="#fbfffb"/>
<rect x="423.70" y="225.0" width="2.0" height="10.8" fill="#fbfffb"/>
<rect x="440.80" y="199.0" width="2.0" height="28.5" fill="#fbfffb"/>
<rect x="448.00" y="215.0" width="2.0" height="5.8" fill="#fbfffb"/>
<rect x="454.70" y="219.2" width="2.0" height="8.3" fill="#fbfffb"/>
<rect x="461.30" y="224.2" width="2.0" height="5.0" fill="#fbfffb"/>
<rect x="471.70" y="215.8" width="2.0" height="8.4" fill="#fbfffb"/>
<rect x="488.70" y="190.0" width="2.0" height="10.8" fill="#fbfffb"/>
<rect x="492.20" y="201.7" width="2.0" height="4.1" fill="#fbfffb"/>
<rect x="505.80" y="200.8" width="2.0" height="30.9" fill="#fbfffb"/>
<rect x="509.20" y="230.0" width="2.0" height="10.8" fill="#fbfffb"/>
<rect x="512.60" y="242.5" width="2.0" height="14.5" fill="#fbfffb"/>
<rect x="519.40" y="246.7" width="2.0" height="10.0" fill="#fbfffb"/>
<rect x="529.60" y="257.5" width="2.0" height="2.3" fill="#fbfffb"/>
<rect x="543.20" y="244.7" width="2.0" height="2.0" fill="#fbfffb"/>
<rect x="556.80" y="238.3" width="2.0" height="3.0" fill="#fbfffb"/>
<rect x="560.20" y="241.7" width="2.0" height="14.1" fill="#fbfffb"/>
<rect x="563.70" y="254.2" width="2.0" height="5.8" fill="#fbfffb"/>
<rect x="570.70" y="255.8" width="2.0" height="10.9" fill="#fbfffb"/>
<rect x="502.5" y="185" width="2.0" height="13.3" fill="#c9f0c4"/>
<polyline points="219.8,247.5 235.7,243.0 252.3,238.8 269.0,235.3 285.7,232.7 302.3,230.7 319.0,229.5 325.0,229.2 341.7,227.0 358.3,224.7 375.0,222.5 391.7,220.8 408.3,219.2 425.0,218.0 431.0,217.5 447.7,216.3 464.3,215.0 481.0,214.2 497.7,212.5 514.3,211.7 531.0,211.3 575.0,211.3" fill="none" stroke="#f4f4f4" stroke-width="0.95" stroke-linejoin="round" stroke-linecap="round" />
<polyline points="219.8,205.0 235.7,200.8 252.3,196.7 269.0,193.3 285.7,191.7 302.3,189.2 319.0,187.5 325.0,187.0 338.3,186.3 356.7,184.7 371.7,183.3 391.7,180.5 398.0,180.4 431.0,182.5 464.3,184.5 487.7,185.0 506.0,185.3 521.0,189.2 542.8,194.6 575.0,204.7" fill="none" stroke="#e8e23a" stroke-width="0.9" stroke-linejoin="round" stroke-linecap="round" />
<polyline points="219.8,166.7 251.5,166.7 254.8,164.2 259.8,161.7 265.7,160.3 285.7,160.3 290.7,157.5 294.8,156.7 299.0,160.0 305.7,160.8 309.0,164.2 312.0,168.0 316.0,169.2 325.0,169.5 356.7,169.5 359.2,172.5 395.0,173.0 397.5,175.8 400.0,185.0 402.5,191.7 405.0,193.3 461.0,193.3 464.3,195.8 468.5,201.7 472.7,206.7 479.3,211.7 482.7,216.7 486.0,215.0 492.7,212.5 509.3,212.0 511.8,216.7 516.0,221.7 524.3,223.3 529.3,225.0 570.0,225.0 575.0,229.2" fill="none" stroke="#1515cc" stroke-width="1.12" stroke-linejoin="round" stroke-linecap="round" />
<polyline points="219.8,165.0 229.0,161.7 237.3,157.5 245.7,155.8 254.0,158.3 262.3,162.5 269.0,167.5 275.7,170.8 284.0,172.5 292.3,172.5 300.7,170.8 309.0,168.3 315.7,166.7 322.0,167.0 325.0,167.5 335.0,173.3 345.0,176.7 351.7,177.5 358.3,183.3 366.7,183.3 375.0,180.0 383.3,177.5 391.7,175.8 396.7,179.2 401.7,188.3 406.7,195.0 411.7,201.7 415.8,208.3 420.8,212.5 423.3,220.0 425.0,223.3 429.2,225.0 436.8,221.7 441.0,220.8 451.0,219.2 464.3,219.7 474.3,220.0 481.0,219.7 487.7,216.7 497.7,212.5 506.0,210.8 514.3,215.0 521.0,220.0 527.7,223.3 532.7,230.0 537.7,235.0 541.7,240.8 546.7,245.8 550.8,250.0 556.7,250.0 563.3,249.2 570.0,250.0 575.0,251.7" fill="none" stroke="#dc1c1c" stroke-width="0.85" stroke-linejoin="round" stroke-linecap="round" />
<polyline points="219.8,162.5 227.3,160.0 234.0,153.3 239.0,148.3 244.0,146.7 246.5,153.3 258.2,154.2 262.3,158.3 267.3,162.5 274.0,166.7 280.7,168.3 290.7,169.2 300.7,170.0 309.0,165.8 315.7,165.0 322.3,167.5 325.0,170.8 333.3,174.2 343.3,176.7 350.0,173.3 355.0,180.0 360.0,185.0 365.0,188.3 369.2,184.2 375.0,176.7 378.3,173.3 385.8,172.5 390.8,167.5 394.2,173.3 398.3,180.0 403.3,185.0 411.7,190.0 418.3,198.3 420.0,200.0 425.0,208.3 431.7,215.8 436.0,218.3 444.3,221.3 456.0,220.3 467.7,221.7 479.3,220.8 484.3,215.0 488.5,209.2 494.3,208.3 506.0,208.3 511.0,212.5 517.7,218.3 526.0,223.3 531.0,227.5 534.2,232.5 536.7,243.3 539.2,250.0 543.3,251.7 550.0,251.7 558.3,250.0 566.7,250.0 575.0,252.0" fill="none" stroke="#ff2a2a" stroke-width="0.85" stroke-linejoin="round" stroke-linecap="round" />
<polyline points="219.8,158.3 223.2,143.3 224.8,145.0 227.3,165.0 231.5,176.7 235.7,185.0 239.8,186.7 244.0,176.7 247.3,185.0 249.8,189.2 254.8,183.3 259.0,178.3 262.3,181.7 266.5,190.0 270.7,185.0 276.5,180.0 281.5,171.7 284.8,161.7 289.0,158.3 292.3,164.2 294.8,175.0 297.3,174.2 300.7,172.5 302.3,185.0 304.0,195.0 305.7,203.3 309.0,205.0 312.3,238.3 315.7,221.7 319.0,211.7 325.2,215.0 327.5,218.3 330.8,226.7 333.3,225.0 336.7,235.0 341.7,225.0 345.8,216.7 350.0,205.8 353.3,226.7 356.7,214.2 360.0,220.0 363.3,220.8 366.7,226.7 370.0,224.2 373.3,228.3 380.0,215.8 383.3,223.3 387.5,227.5 391.7,220.8 394.2,205.0 395.0,190.0 396.7,183.3 400.0,195.0 403.3,205.5 406.7,198.3 410.8,188.3 413.3,196.7 415.8,210.0 417.5,225.0 420.0,236.7 422.5,248.3 425.0,255.0 428.3,248.3 431.5,256.0 435.2,257.5 438.5,255.8 441.8,259.2 446.0,251.7 451.8,242.5 456.8,246.7 461.8,250.0 466.0,237.5 469.3,245.0 473.5,256.7 476.8,259.2 479.3,254.2 482.7,265.0 486.0,265.8" fill="none" stroke="#2be02b" stroke-width="0.8" stroke-linejoin="round" stroke-linecap="round" />
<polyline points="220.3,303.3 224.0,310.5 229.8,308.7 237.3,319.5 241.5,318.3 244.0,319.2 248.2,326.3 253.2,326.3 258.2,322.0 264.0,327.5 271.5,318.3 275.7,323.3 281.5,318.3 285.7,320.0 292.3,324.2 298.2,328.7 305.7,316.7 309.0,317.2 312.3,313.7 315.7,322.2 320.7,325.0 326.5,328.3 329.2,328.3 332.5,324.2 336.7,328.3 340.0,328.3 346.7,324.2 353.3,325.0 356.7,329.2 363.3,323.3 366.7,321.7 377.5,313.0 380.8,316.7 384.2,322.5 387.5,321.2 390.8,324.2 394.2,333.0 397.5,333.3 401.3,341.3 408.3,329.7 414.2,330.3 418.3,334.2 421.7,332.2 425.0,334.7 431.0,330.3 435.2,326.7 438.5,322.2 441.8,328.7 445.2,324.2 448.5,326.2 451.8,326.2 456.0,328.3 459.3,326.7 462.7,328.3 468.5,323.0 472.7,326.2 476.0,327.5 479.3,324.2 483.5,315.3 486.0,313.0 489.3,318.3 492.7,320.3 499.3,315.3 502.5,318.6 506.8,327.5 511.0,330.8 513.4,333.5 516.8,330.8 521.0,332.5 523.5,333.0 527.6,332.0 531.0,332.8 534.3,330.3 538.4,326.2 545.0,327.2 550.8,328.3 554.2,322.5 557.5,324.2 561.7,329.2 564.2,330.0 568.0,327.5 571.7,331.3 575.0,331.3" fill="none" stroke="#4a9aea" stroke-width="0.95" stroke-linejoin="round" stroke-linecap="round" />
<text x="585.2" y="121.35000000000001" font-size="3.3" fill="#fff" text-anchor="start" font-weight="normal" textLength="10.6" lengthAdjust="spacingAndGlyphs">1.14575</text>
<line x1="583.4" y1="120.20" x2="584.4" y2="120.20" stroke="#ccc" stroke-width="0.4"/>
<text x="585.2" y="137.85" font-size="3.3" fill="#fff" text-anchor="start" font-weight="normal" textLength="10.6" lengthAdjust="spacingAndGlyphs">1.14550</text>
<line x1="583.4" y1="136.70" x2="584.4" y2="136.70" stroke="#ccc" stroke-width="0.4"/>
<text x="585.2" y="154.35" font-size="3.3" fill="#fff" text-anchor="start" font-weight="normal" textLength="10.6" lengthAdjust="spacingAndGlyphs">1.14525</text>
<line x1="583.4" y1="153.20" x2="584.4" y2="153.20" stroke="#ccc" stroke-width="0.4"/>
<text x="585.2" y="170.85" font-size="3.3" fill="#fff" text-anchor="start" font-weight="normal" textLength="10.6" lengthAdjust="spacingAndGlyphs">1.14500</text>
<line x1="583.4" y1="169.70" x2="584.4" y2="169.70" stroke="#ccc" stroke-width="0.4"/>
<text x="585.2" y="187.35" font-size="3.3" fill="#fff" text-anchor="start" font-weight="normal" textLength="10.6" lengthAdjust="spacingAndGlyphs">1.14475</text>
<line x1="583.4" y1="186.20" x2="584.4" y2="186.20" stroke="#ccc" stroke-width="0.4"/>
<text x="585.2" y="203.85" font-size="3.3" fill="#fff" text-anchor="start" font-weight="normal" textLength="10.6" lengthAdjust="spacingAndGlyphs">1.14450</text>
<line x1="583.4" y1="202.70" x2="584.4" y2="202.70" stroke="#ccc" stroke-width="0.4"/>
<text x="585.2" y="220.35" font-size="3.3" fill="#fff" text-anchor="start" font-weight="normal" textLength="10.6" lengthAdjust="spacingAndGlyphs">1.14425</text>
<line x1="583.4" y1="219.20" x2="584.4" y2="219.20" stroke="#ccc" stroke-width="0.4"/>
<text x="585.2" y="236.85" font-size="3.3" fill="#fff" text-anchor="start" font-weight="normal" textLength="10.6" lengthAdjust="spacingAndGlyphs">1.14400</text>
<line x1="583.4" y1="235.70" x2="584.4" y2="235.70" stroke="#ccc" stroke-width="0.4"/>
<text x="585.2" y="253.35" font-size="3.3" fill="#fff" text-anchor="start" font-weight="normal" textLength="10.6" lengthAdjust="spacingAndGlyphs">1.14375</text>
<line x1="583.4" y1="252.20" x2="584.4" y2="252.20" stroke="#ccc" stroke-width="0.4"/>
<text x="585.2" y="269.84999999999997" font-size="3.3" fill="#fff" text-anchor="start" font-weight="normal" textLength="10.6" lengthAdjust="spacingAndGlyphs">1.14350</text>
<line x1="583.4" y1="268.70" x2="584.4" y2="268.70" stroke="#ccc" stroke-width="0.4"/>
<rect x="584.2" y="264.1" width="11.6" height="3.5" fill="#f2f2f2"/>
<text x="585.2" y="266.9" font-size="3.0" fill="#000" text-anchor="start" font-weight="normal">1.14443</text>
<text x="585.0" y="283.6" font-size="3.0" fill="#e8e8e8" text-anchor="start" font-weight="normal">100</text>
<text x="585.0" y="306.4" font-size="3.0" fill="#e8e8e8" text-anchor="start" font-weight="normal">70</text>
<text x="585.0" y="339.4" font-size="3.0" fill="#e8e8e8" text-anchor="start" font-weight="normal">30</text>
<text x="585.0" y="362.3" font-size="3.0" fill="#e8e8e8" text-anchor="start" font-weight="normal">0</text>
<path d="M581.6 113.89999999999999 L583.4 113.89999999999999 L582.5 115.19999999999999 Z" fill="#aaa"/>
<text x="221.3" y="117.9" font-size="3.2" fill="#fff" text-anchor="start" font-weight="bold" textLength="67.4" lengthAdjust="spacingAndGlyphs">▼ EURUSD,M1  1.14450 1.14453 1.14438 1.14443</text>
<text x="221.0" y="284.1" font-size="3.1" fill="#fff" text-anchor="start" font-weight="normal" textLength="22.2" lengthAdjust="spacingAndGlyphs">RSI(14) 39.6923</text>
<text x="220.2" y="367.4" font-size="3.3" fill="#fff" text-anchor="start" font-weight="normal" textLength="16.2" lengthAdjust="spacingAndGlyphs">6 Jul 2025 </text>
<text x="247.5" y="367.4" font-size="3.3" fill="#fff" text-anchor="start" font-weight="normal" textLength="16.2" lengthAdjust="spacingAndGlyphs">6 Jul 03:15</text>
<text x="274.8" y="367.4" font-size="3.3" fill="#fff" text-anchor="start" font-weight="normal" textLength="16.2" lengthAdjust="spacingAndGlyphs">6 Jul 03:23</text>
<text x="302.1" y="367.4" font-size="3.3" fill="#fff" text-anchor="start" font-weight="normal" textLength="16.2" lengthAdjust="spacingAndGlyphs">6 Jul 03:31</text>
<text x="329.4" y="367.4" font-size="3.3" fill="#fff" text-anchor="start" font-weight="normal" textLength="16.2" lengthAdjust="spacingAndGlyphs">6 Jul 03:39</text>
<text x="356.7" y="367.4" font-size="3.3" fill="#fff" text-anchor="start" font-weight="normal" textLength="16.2" lengthAdjust="spacingAndGlyphs">6 Jul 03:47</text>
<text x="384.0" y="367.4" font-size="3.3" fill="#fff" text-anchor="start" font-weight="normal" textLength="16.2" lengthAdjust="spacingAndGlyphs">6 Jul 03:55</text>
<text x="411.29999999999995" y="367.4" font-size="3.3" fill="#fff" text-anchor="start" font-weight="normal" textLength="16.2" lengthAdjust="spacingAndGlyphs">6 Jul 04:03</text>
<text x="438.6" y="367.4" font-size="3.3" fill="#fff" text-anchor="start" font-weight="normal" textLength="16.2" lengthAdjust="spacingAndGlyphs">6 Jul 04:11</text>
<text x="465.9" y="367.4" font-size="3.3" fill="#fff" text-anchor="start" font-weight="normal" textLength="16.2" lengthAdjust="spacingAndGlyphs">6 Jul 04:19</text>
<text x="493.2" y="367.4" font-size="3.3" fill="#fff" text-anchor="start" font-weight="normal" textLength="16.2" lengthAdjust="spacingAndGlyphs">6 Jul 04:27</text>
<text x="520.5" y="367.4" font-size="3.3" fill="#fff" text-anchor="start" font-weight="normal" textLength="16.2" lengthAdjust="spacingAndGlyphs">6 Jul 04:35</text>
<text x="547.8" y="367.4" font-size="3.3" fill="#fff" text-anchor="start" font-weight="normal" textLength="16.2" lengthAdjust="spacingAndGlyphs">6 Jul 04:43</text>
<text x="575.1" y="367.4" font-size="3.3" fill="#fff" text-anchor="start" font-weight="normal">6</text>
<defs><linearGradient id="ocg" x1="0" y1="0" x2="0" y2="1"><stop offset="0" stop-color="#2c2ee6"/><stop offset="1" stop-color="#1919b2"/></linearGradient><linearGradient id="ocb" x1="0" y1="0" x2="0" y2="1"><stop offset="0" stop-color="#444cec"/><stop offset="1" stop-color="#3238dc"/></linearGradient></defs>
<rect x="220.9" y="120.0" width="67.5" height="18.8" fill="#1f1fb8"/>
<rect x="221.1" y="120.1" width="15.6" height="6.4" fill="url(#ocb)"/>
<rect x="272.0" y="120.1" width="16.2" height="6.4" fill="url(#ocb)"/>
<rect x="221.1" y="126.9" width="33.1" height="11.7" fill="url(#ocg)"/>
<rect x="254.8" y="126.9" width="33.4" height="11.7" fill="url(#ocg)"/>
<rect x="238.0" y="120.15" width="33.0" height="5.95" fill="#fff"/>
<rect x="238.3" y="120.5" width="3.6" height="5.3" fill="#e6e6e6"/><rect x="267.0" y="120.5" width="3.6" height="5.3" fill="#e6e6e6"/>
<path d="M239.2 122.7 L241.0 122.7 L240.1 124.0 Z" fill="#222"/><path d="M267.9 123.8 L269.7 123.8 L268.8 122.5 Z" fill="#222"/>
<text x="264.4" y="124.8" font-size="4.2" fill="#111" text-anchor="end" font-weight="normal">1.00</text>
<text x="225.5" y="124.75" font-size="3.9" fill="#d5daff" text-anchor="start" font-weight="bold" textLength="6.9" lengthAdjust="spacingAndGlyphs">SELL</text>
<text x="277.0" y="124.75" font-size="3.9" fill="#d5daff" text-anchor="start" font-weight="bold" textLength="6.2" lengthAdjust="spacingAndGlyphs">BUY</text>
<text x="228.5" y="136.2" font-size="3.1" fill="#fff" text-anchor="start" font-weight="normal" textLength="6.0" lengthAdjust="spacingAndGlyphs">1.14</text>
<text x="235.6" y="136.7" font-size="10" fill="#fff" text-anchor="start" font-weight="normal" textLength="10.4" lengthAdjust="spacingAndGlyphs">44</text>
<text x="247.2" y="132.4" font-size="3.9" fill="#fff" text-anchor="start" font-weight="normal">3</text>
<text x="261.9" y="136.2" font-size="3.1" fill="#fff" text-anchor="start" font-weight="normal" textLength="6.0" lengthAdjust="spacingAndGlyphs">1.14</text>
<text x="269.0" y="136.7" font-size="10" fill="#fff" text-anchor="start" font-weight="normal" textLength="10.4" lengthAdjust="spacingAndGlyphs">45</text>
<text x="280.6" y="132.4" font-size="3.9" fill="#fff" text-anchor="start" font-weight="normal">3</text></svg>
<div class="a" style="left:219.40px;top:369.40px;width:377.60px;height:7.20px;background:#f0f0f0;"></div>
<div class="a" style="left:219.40px;top:369.30px;width:377.60px;height:0.35px;background:#9a9a9a;"></div>
<div class="a" style="left:220.20px;top:369.70px;width:286.80px;height:5.30px;background:#f6f6f6;border-bottom:0.35px solid #aaa;"></div>
<div class="a t" style="top:369.40px;height:6px;line-height:6px;font-size:3.62px;color:#5a5a5a;left:224.00px;">NAS100USD,Daily</div>
<div class="a" style="left:258.05px;top:370.40px;width:0.30px;height:4.20px;background:#9a9a9a;"></div>
<div class="a t" style="top:369.40px;height:6px;line-height:6px;font-size:3.62px;color:#5a5a5a;left:261.50px;">USDJPY,Daily</div>
<div class="a" style="left:287.55px;top:370.40px;width:0.30px;height:4.20px;background:#9a9a9a;"></div>
<div class="a t" style="top:369.40px;height:6px;line-height:6px;font-size:3.62px;color:#5a5a5a;left:290.70px;">AUDUSD,Daily</div>
<div class="a" style="left:318.55px;top:370.40px;width:0.30px;height:4.20px;background:#9a9a9a;"></div>
<div class="a t" style="top:369.40px;height:6px;line-height:6px;font-size:3.62px;color:#5a5a5a;left:322.30px;">EURUSD,Daily</div>
<div class="a" style="left:349.55px;top:370.40px;width:0.30px;height:4.20px;background:#9a9a9a;"></div>
<div class="a t" style="top:369.40px;height:6px;line-height:6px;font-size:3.62px;color:#5a5a5a;left:353.30px;">GBPJPY,Daily</div>
<div class="a" style="left:377.35px;top:370.40px;width:0.30px;height:4.20px;background:#9a9a9a;"></div>
<div class="a t" style="top:369.40px;height:6px;line-height:6px;font-size:3.62px;color:#5a5a5a;left:380.80px;">XAUUSD,Daily</div>
<div class="a" style="left:407.65px;top:370.40px;width:0.30px;height:4.20px;background:#9a9a9a;"></div>
<div class="a t" style="top:369.40px;height:6px;line-height:6px;font-size:3.62px;color:#5a5a5a;left:411.70px;">AUDJPY,Daily</div>
<div class="a" style="left:437.85px;top:370.40px;width:0.30px;height:4.20px;background:#9a9a9a;"></div>
<div class="a t" style="top:369.40px;height:6px;line-height:6px;font-size:3.62px;color:#5a5a5a;left:441.30px;">US30USD,Daily</div>
<div class="a" style="left:470.35px;top:370.40px;width:0.30px;height:4.20px;background:#9a9a9a;"></div>
<div class="a t" style="top:369.40px;height:6px;line-height:6px;font-size:3.62px;color:#5a5a5a;left:474.00px;">SPX500USD,Daily</div>
<div class="a" style="left:506.25px;top:370.40px;width:0.30px;height:4.20px;background:#9a9a9a;"></div>
<div class="a" style="left:507.30px;top:369.40px;width:26.90px;height:6.00px;background:#fff;border:0.35px solid #999;border-top:none;"></div>
<div class="a t" style="top:369.30px;height:6px;line-height:6px;font-size:3.6px;color:#222;left:510.20px;">EURUSD,M1</div>
<div class="a" style="left:588.6px;top:371.9px;width:0;height:0;border-top:0.8px solid transparent;border-bottom:0.8px solid transparent;border-left:1.0px solid #555;"></div>
</div></div>
</body></html>
